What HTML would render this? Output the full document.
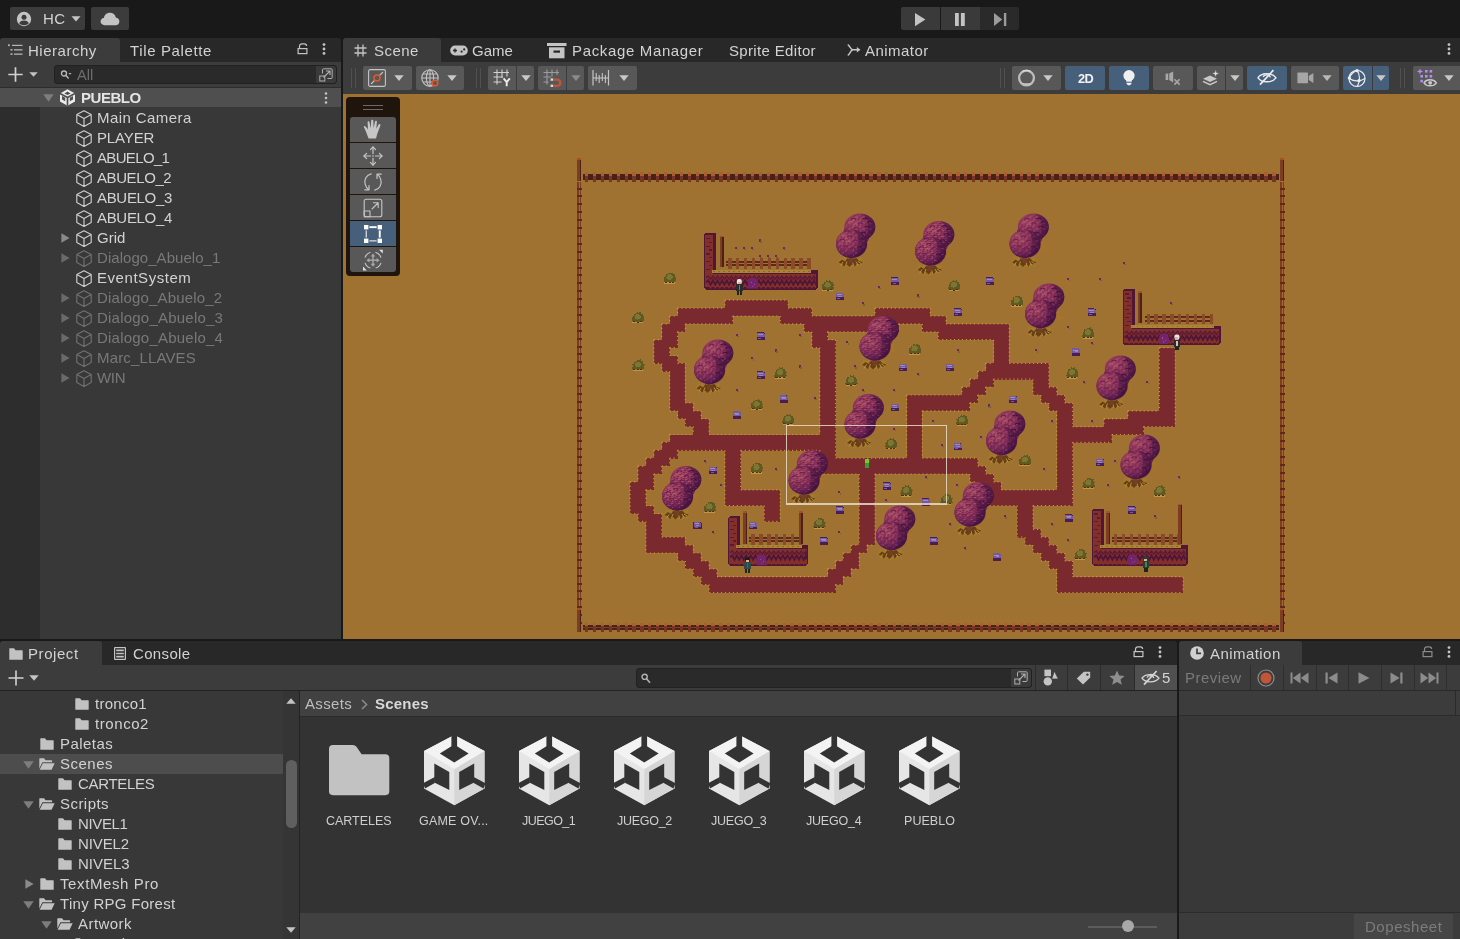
<!DOCTYPE html>
<html lang="en">
<head>
<meta charset="utf-8">
<title>Unity Editor</title>
<style>
html,body{margin:0;padding:0;}
body{width:1460px;height:939px;overflow:hidden;background:#191919;position:relative;
 font-family:"Liberation Sans","DejaVu Sans",sans-serif;font-size:16px;color:#d2d2d2;line-height:20px;}
.abs{position:absolute;}
.t{position:absolute;white-space:nowrap;line-height:20px;height:20px;will-change:transform;}
.btn{position:absolute;background:#3c3c3c;border-radius:2px;}
.sb{position:absolute;background:#585858;top:66px;height:24px;border-radius:2px;}
.sb.on{background:#46607c;}
.dim{color:#7f7f7f;}
svg{position:absolute;overflow:visible;}
.row{position:absolute;left:0;height:20px;}
</style>
</head>
<body>

<!-- ===== top bar ===== -->
<div class="abs" style="left:0;top:0;width:1460px;height:38px;background:#191919"></div>
<div class="btn" style="left:10px;top:7px;width:75px;height:23px"></div>
<svg style="left:16px;top:11px" width="16" height="16" viewBox="0 0 16 16"><circle cx="8" cy="8" r="7.2" fill="#c4c4c4"/><circle cx="8" cy="6.2" r="2.5" fill="#3c3c3c"/><path d="M3.2 12.3 C4.2 10.2 6 9.6 8 9.6 S11.8 10.2 12.8 12.3 C11.6 13.6 9.9 14.2 8 14.2 S4.4 13.6 3.2 12.3Z" fill="#3c3c3c"/></svg>
<div class="t" style="left:42.6px;top:9px;font-size:15px;letter-spacing:0.3px">HC</div>
<svg style="left:71px;top:16px" width="10" height="6" viewBox="0 0 10 6"><path d="M0.5 0.3 H9.5 L5 5.6Z" fill="#c4c4c4"/></svg>
<div class="btn" style="left:91px;top:7px;width:38px;height:23px"></div>
<svg style="left:100px;top:12px" width="20" height="14" viewBox="0 0 20 14"><path d="M4.6 13.2 C2.2 13.2 0.6 11.6 0.6 9.6 C0.6 7.7 2 6.3 3.8 6.1 C4.3 3 6.7 0.8 9.9 0.8 C12.9 0.8 15.3 2.8 15.8 5.6 C17.9 5.9 19.4 7.5 19.4 9.5 C19.4 11.6 17.7 13.2 15.5 13.2Z" fill="#c4c4c4"/></svg>

<!-- play controls -->
<div class="btn" style="left:901px;top:7px;width:39px;height:23px;background:#3a3a3a;border-radius:2px 0 0 2px"></div>
<div class="btn" style="left:941px;top:7px;width:39px;height:23px;background:#3a3a3a;border-radius:0"></div>
<div class="btn" style="left:980px;top:7px;width:39.4px;height:23px;background:#2a2a2a;border-radius:0 2px 2px 0"></div>
<svg style="left:914.9px;top:12.7px" width="10.4" height="13.2" viewBox="0 0 10.4 13.2"><path d="M0 0 L10.4 6.6 L0 13.2Z" fill="#c4c4c4"/></svg>
<svg style="left:955.2px;top:12.9px" width="9.8" height="13" viewBox="0 0 9.8 13"><rect x="0" y="0" width="3.8" height="13" fill="#c4c4c4"/><rect x="5.9" y="0" width="3.9" height="13" fill="#c4c4c4"/></svg>
<svg style="left:994px;top:12.9px" width="12.4" height="13" viewBox="0 0 12.4 13"><path d="M0 0 L8.3 6.5 L0 13Z" fill="#9c9c9c"/><rect x="9.9" y="0" width="2.4" height="13" fill="#9c9c9c"/></svg>

<!-- ===== hierarchy panel ===== -->
<div class="abs" style="left:0;top:38px;width:341px;height:24px;background:#282828;border-radius:3px 3px 0 0"></div>
<div class="abs" style="left:0;top:38px;width:120px;height:24px;background:#3c3c3c;border-radius:3px 3px 0 0"></div>
<svg style="left:8px;top:44px" width="15" height="12" viewBox="0 0 15 12"><g fill="#b4b4b4"><rect x="0" y="0.3" width="1.8" height="1.8"/><rect x="4" y="0.8" width="10.5" height="1.2"/><rect x="2.5" y="5" width="2" height="1.6"/><rect x="6" y="5.2" width="8.5" height="1.3"/><rect x="2.5" y="9.3" width="2" height="1.6"/><rect x="6" y="9.5" width="8.5" height="1.3"/></g></svg>
<div class="t" style="left:28px;top:41px;font-size:15px;letter-spacing:0.52px">Hierarchy</div>
<div class="t" style="left:130px;top:41px;font-size:15px;letter-spacing:0.62px">Tile Palette</div>
<svg style="left:297px;top:43px" width="12" height="12" viewBox="0 0 12 12"><path d="M2.5 5 V3.2 C2.5 1.6 3.6 0.8 4.9 0.8 H7.4 C8.8 0.8 9.6 1.8 9.6 3" fill="none" stroke="#c4c4c4" stroke-width="1.2"/><rect x="1.1" y="5.6" width="8.8" height="5" fill="none" stroke="#c4c4c4" stroke-width="1.2"/></svg>
<svg style="left:322px;top:43px" width="4" height="12" viewBox="0 0 4 12"><circle cx="2" cy="1.6" r="1.4" fill="#c4c4c4"/><circle cx="2" cy="6" r="1.4" fill="#c4c4c4"/><circle cx="2" cy="10.4" r="1.4" fill="#c4c4c4"/></svg>

<div class="abs" style="left:0;top:62px;width:341px;height:25px;background:#3c3c3c"></div>
<svg style="left:8px;top:67px" width="15" height="15" viewBox="0 0 15 15"><path d="M7.5 0.3 V14.7 M0.3 7.5 H14.7" stroke="#d2d2d2" stroke-width="1.7" fill="none"/></svg>
<svg style="left:29px;top:72px" width="9" height="5" viewBox="0 0 9 5"><path d="M0.3 0.2 H8.7 L4.5 4.8Z" fill="#c4c4c4"/></svg>
<div class="abs" style="left:54px;top:65px;width:283px;height:19px;background:#2a2a2a;border:1px solid #212121;border-radius:3px;box-sizing:border-box"></div>
<svg style="left:60px;top:69px" width="12" height="12" viewBox="0 0 12 12"><circle cx="4" cy="4.5" r="2.5" fill="none" stroke="#b4b4b4" stroke-width="1.4"/><path d="M5.8 6.3 L8.6 9.4" stroke="#b4b4b4" stroke-width="1.5"/><path d="M8.4 4 H11.6 L10 5.8Z" fill="#b4b4b4"/></svg>
<div class="t" style="left:77px;top:65px;color:#6e6e6e;font-size:14.5px">All</div>
<div class="abs" style="left:316px;top:66px;width:20px;height:17px;background:#3a3a3a;border-radius:0 3px 3px 0"></div>
<svg style="left:319px;top:68px" width="14" height="14" viewBox="0 0 14 14"><path d="M3.5 5.5 V1.8 C3.5 1.2 3.9 0.8 4.5 0.8 H12.2 C12.8 0.8 13.2 1.2 13.2 1.8 V9.5 C13.2 10.1 12.8 10.5 12.2 10.5 H8.5" fill="none" stroke="#b0b0b0" stroke-width="1"/><rect x="0.8" y="8" width="5" height="5" fill="none" stroke="#b0b0b0" stroke-width="1"/><path d="M4.5 9.5 L10.8 3.2 M7 3 H11 V7" fill="none" stroke="#b0b0b0" stroke-width="1.2"/></svg>

<div class="abs" style="left:0;top:87px;width:341px;height:552px;background:#383838"></div>
<div class="abs" style="left:0;top:107px;width:40px;height:532px;background:#2d2d2d"></div>
<div class="abs" style="left:0;top:87px;width:341px;height:20px;background:#4f4f4f;border-top:1px solid #2d2d2d;box-sizing:border-box"></div>
<!-- hierarchy rows -->
<svg style="left:43px;top:94px" width="11" height="8" viewBox="0 0 11 8"><path d="M0.3 0.3 H10.7 L5.5 7.7Z" fill="#7d7d7d"/></svg>
<svg style="left:59px;top:89px" width="17" height="17" viewBox="0 0 17 17"><path d="M8.5 0.3 L16 4.4 V12.6 L8.5 16.7 L1 12.6 V4.4Z" fill="#ececec"/><g stroke="#4f4f4f" stroke-width="1.7" fill="none"><path d="M8.5 8.5 V16.7 M8.5 8.5 L1 4.4 M8.5 8.5 L16 4.4"/></g><g fill="#4f4f4f"><path d="M8.5 2.6 L11.6 4.4 L8.5 6.1 L5.4 4.4Z"/><path d="M3 7 L6.2 8.8 V12.3 L3 10.6Z"/><path d="M14 7 L10.8 8.8 V12.3 L14 10.6Z"/></g></svg>
<div class="t" style="left:81px;top:88px;font-size:15px;font-weight:bold;color:#e4e4e4;letter-spacing:-0.48px;">PUEBLO</div>
<svg style="left:324px;top:92px" width="4" height="12" viewBox="0 0 4 12"><circle cx="2" cy="1.5" r="1.3" fill="#c4c4c4"/><circle cx="2" cy="6" r="1.3" fill="#c4c4c4"/><circle cx="2" cy="10.5" r="1.3" fill="#c4c4c4"/></svg>
<svg style="left:76px;top:109.5px" width="16" height="17" viewBox="0 0 16 17"><path d="M8 0.8 L15.2 4.6 V12.6 L8 16.4 L0.8 12.6 V4.6 Z M0.8 4.6 L8 8.4 L15.2 4.6 M8 8.4 V16.4" fill="none" stroke="#cfcfcf" stroke-width="1.15" stroke-linejoin="round"/></svg>
<div class="t" style="left:97px;top:108px;font-size:15px;color:#d2d2d2;letter-spacing:0.43px;">Main Camera</div>
<svg style="left:76px;top:129.5px" width="16" height="17" viewBox="0 0 16 17"><path d="M8 0.8 L15.2 4.6 V12.6 L8 16.4 L0.8 12.6 V4.6 Z M0.8 4.6 L8 8.4 L15.2 4.6 M8 8.4 V16.4" fill="none" stroke="#cfcfcf" stroke-width="1.15" stroke-linejoin="round"/></svg>
<div class="t" style="left:97px;top:128px;font-size:15px;color:#d2d2d2;letter-spacing:-0.13px;">PLAYER</div>
<svg style="left:76px;top:149.5px" width="16" height="17" viewBox="0 0 16 17"><path d="M8 0.8 L15.2 4.6 V12.6 L8 16.4 L0.8 12.6 V4.6 Z M0.8 4.6 L8 8.4 L15.2 4.6 M8 8.4 V16.4" fill="none" stroke="#cfcfcf" stroke-width="1.15" stroke-linejoin="round"/></svg>
<div class="t" style="left:97px;top:148px;font-size:15px;color:#d2d2d2;letter-spacing:-0.66px;">ABUELO_1</div>
<svg style="left:76px;top:169.5px" width="16" height="17" viewBox="0 0 16 17"><path d="M8 0.8 L15.2 4.6 V12.6 L8 16.4 L0.8 12.6 V4.6 Z M0.8 4.6 L8 8.4 L15.2 4.6 M8 8.4 V16.4" fill="none" stroke="#cfcfcf" stroke-width="1.15" stroke-linejoin="round"/></svg>
<div class="t" style="left:97px;top:168px;font-size:15px;color:#d2d2d2;letter-spacing:-0.41px;">ABUELO_2</div>
<svg style="left:76px;top:189.5px" width="16" height="17" viewBox="0 0 16 17"><path d="M8 0.8 L15.2 4.6 V12.6 L8 16.4 L0.8 12.6 V4.6 Z M0.8 4.6 L8 8.4 L15.2 4.6 M8 8.4 V16.4" fill="none" stroke="#cfcfcf" stroke-width="1.15" stroke-linejoin="round"/></svg>
<div class="t" style="left:97px;top:188px;font-size:15px;color:#d2d2d2;letter-spacing:-0.32px;">ABUELO_3</div>
<svg style="left:76px;top:209.5px" width="16" height="17" viewBox="0 0 16 17"><path d="M8 0.8 L15.2 4.6 V12.6 L8 16.4 L0.8 12.6 V4.6 Z M0.8 4.6 L8 8.4 L15.2 4.6 M8 8.4 V16.4" fill="none" stroke="#cfcfcf" stroke-width="1.15" stroke-linejoin="round"/></svg>
<div class="t" style="left:97px;top:208px;font-size:15px;color:#d2d2d2;letter-spacing:-0.32px;">ABUELO_4</div>
<svg style="left:61px;top:233px" width="9" height="10" viewBox="0 0 9 10"><path d="M0.4 0.3 L8.6 5 L0.4 9.7Z" fill="#8a8a8a"/></svg>
<svg style="left:76px;top:229.5px" width="16" height="17" viewBox="0 0 16 17"><path d="M8 0.8 L15.2 4.6 V12.6 L8 16.4 L0.8 12.6 V4.6 Z M0.8 4.6 L8 8.4 L15.2 4.6 M8 8.4 V16.4" fill="none" stroke="#cfcfcf" stroke-width="1.15" stroke-linejoin="round"/></svg>
<div class="t" style="left:97px;top:228px;font-size:15px;color:#d2d2d2;letter-spacing:-0.01px;">Grid</div>
<svg style="left:61px;top:253px" width="9" height="10" viewBox="0 0 9 10"><path d="M0.4 0.3 L8.6 5 L0.4 9.7Z" fill="#6a6a6a"/></svg>
<svg style="left:76px;top:249.5px" width="16" height="17" viewBox="0 0 16 17"><path d="M8 0.8 L15.2 4.6 V12.6 L8 16.4 L0.8 12.6 V4.6 Z M0.8 4.6 L8 8.4 L15.2 4.6 M8 8.4 V16.4" fill="none" stroke="#707070" stroke-width="1.15" stroke-linejoin="round"/></svg>
<div class="t" style="left:97px;top:248px;font-size:15px;color:#787878;letter-spacing:0.05px;">Dialogo_Abuelo_1</div>
<svg style="left:76px;top:269.5px" width="16" height="17" viewBox="0 0 16 17"><path d="M8 0.8 L15.2 4.6 V12.6 L8 16.4 L0.8 12.6 V4.6 Z M0.8 4.6 L8 8.4 L15.2 4.6 M8 8.4 V16.4" fill="none" stroke="#cfcfcf" stroke-width="1.15" stroke-linejoin="round"/></svg>
<div class="t" style="left:97px;top:268px;font-size:15px;color:#d2d2d2;letter-spacing:0.55px;">EventSystem</div>
<svg style="left:61px;top:293px" width="9" height="10" viewBox="0 0 9 10"><path d="M0.4 0.3 L8.6 5 L0.4 9.7Z" fill="#6a6a6a"/></svg>
<svg style="left:76px;top:289.5px" width="16" height="17" viewBox="0 0 16 17"><path d="M8 0.8 L15.2 4.6 V12.6 L8 16.4 L0.8 12.6 V4.6 Z M0.8 4.6 L8 8.4 L15.2 4.6 M8 8.4 V16.4" fill="none" stroke="#707070" stroke-width="1.15" stroke-linejoin="round"/></svg>
<div class="t" style="left:97px;top:288px;font-size:15px;color:#787878;letter-spacing:0.17px;">Dialogo_Abuelo_2</div>
<svg style="left:61px;top:313px" width="9" height="10" viewBox="0 0 9 10"><path d="M0.4 0.3 L8.6 5 L0.4 9.7Z" fill="#6a6a6a"/></svg>
<svg style="left:76px;top:309.5px" width="16" height="17" viewBox="0 0 16 17"><path d="M8 0.8 L15.2 4.6 V12.6 L8 16.4 L0.8 12.6 V4.6 Z M0.8 4.6 L8 8.4 L15.2 4.6 M8 8.4 V16.4" fill="none" stroke="#707070" stroke-width="1.15" stroke-linejoin="round"/></svg>
<div class="t" style="left:97px;top:308px;font-size:15px;color:#787878;letter-spacing:0.22px;">Dialogo_Abuelo_3</div>
<svg style="left:61px;top:333px" width="9" height="10" viewBox="0 0 9 10"><path d="M0.4 0.3 L8.6 5 L0.4 9.7Z" fill="#6a6a6a"/></svg>
<svg style="left:76px;top:329.5px" width="16" height="17" viewBox="0 0 16 17"><path d="M8 0.8 L15.2 4.6 V12.6 L8 16.4 L0.8 12.6 V4.6 Z M0.8 4.6 L8 8.4 L15.2 4.6 M8 8.4 V16.4" fill="none" stroke="#707070" stroke-width="1.15" stroke-linejoin="round"/></svg>
<div class="t" style="left:97px;top:328px;font-size:15px;color:#787878;letter-spacing:0.22px;">Dialogo_Abuelo_4</div>
<svg style="left:61px;top:353px" width="9" height="10" viewBox="0 0 9 10"><path d="M0.4 0.3 L8.6 5 L0.4 9.7Z" fill="#6a6a6a"/></svg>
<svg style="left:76px;top:349.5px" width="16" height="17" viewBox="0 0 16 17"><path d="M8 0.8 L15.2 4.6 V12.6 L8 16.4 L0.8 12.6 V4.6 Z M0.8 4.6 L8 8.4 L15.2 4.6 M8 8.4 V16.4" fill="none" stroke="#707070" stroke-width="1.15" stroke-linejoin="round"/></svg>
<div class="t" style="left:97px;top:348px;font-size:15px;color:#787878;letter-spacing:0.15px;">Marc_LLAVES</div>
<svg style="left:61px;top:373px" width="9" height="10" viewBox="0 0 9 10"><path d="M0.4 0.3 L8.6 5 L0.4 9.7Z" fill="#6a6a6a"/></svg>
<svg style="left:76px;top:369.5px" width="16" height="17" viewBox="0 0 16 17"><path d="M8 0.8 L15.2 4.6 V12.6 L8 16.4 L0.8 12.6 V4.6 Z M0.8 4.6 L8 8.4 L15.2 4.6 M8 8.4 V16.4" fill="none" stroke="#707070" stroke-width="1.15" stroke-linejoin="round"/></svg>
<div class="t" style="left:97px;top:368px;font-size:15px;color:#787878;letter-spacing:-0.29px;">WIN</div>

<!-- ===== scene panel: tabs ===== -->
<div class="abs" style="left:343px;top:38px;width:1117px;height:24px;background:#282828;border-radius:3px 0 0 0"></div>
<div class="abs" style="left:343px;top:38px;width:98px;height:24px;background:#3c3c3c;border-radius:3px 3px 0 0"></div>
<svg style="left:354px;top:44px" width="13" height="13" viewBox="0 0 13 13"><path d="M4 0.5 V12.5 M9 0.5 V12.5 M0.5 4 H12.5 M0.5 9 H12.5" stroke="#c4c4c4" stroke-width="1.3" fill="none"/></svg>
<div class="t" style="left:373.5px;top:41px;font-size:15px;letter-spacing:0.47px;">Scene</div>
<svg style="left:450px;top:45px" width="18" height="11" viewBox="0 0 18 11"><rect x="0.2" y="0.6" width="17.6" height="9.8" rx="4.9" fill="#c4c4c4"/><path d="M3 5.5 H7 M5 3.5 V7.5" stroke="#282828" stroke-width="1.3"/><circle cx="11.6" cy="6.6" r="1.1" fill="#282828"/><circle cx="14.2" cy="4.4" r="1.1" fill="#282828"/></svg>
<div class="t" style="left:471.6px;top:41px;font-size:15px;letter-spacing:-0.04px;">Game</div>
<svg style="left:547px;top:43px" width="20" height="16" viewBox="0 0 20 16"><rect x="0" y="0" width="19.5" height="3" fill="#c4c4c4"/><rect x="2" y="4.3" width="15.5" height="11" fill="#c4c4c4"/><rect x="6.5" y="7.5" width="6.5" height="2.2" fill="#282828"/></svg>
<div class="t" style="left:571.5px;top:41px;font-size:15px;letter-spacing:0.65px;">Package Manager</div>
<div class="t" style="left:729.3px;top:41px;font-size:15px;letter-spacing:0.34px;">Sprite Editor</div>
<svg style="left:847px;top:44px" width="14" height="12" viewBox="0 0 14 12"><path d="M1.2 1 C2.5 1.5 3.6 5.6 6 5.8 H12 M1.2 11 C2.6 10.4 3.4 6.4 6 5.8" stroke="#c4c4c4" stroke-width="1.5" fill="none" stroke-linecap="round"/><path d="M9.8 3 L13.4 5.8 L9.8 8.6Z" fill="#c4c4c4"/></svg>
<div class="t" style="left:865.2px;top:41px;font-size:15px;letter-spacing:0.45px;">Animator</div>
<svg style="left:1447px;top:43px" width="4" height="12" viewBox="0 0 4 12"><circle cx="2" cy="1.6" r="1.4" fill="#c4c4c4"/><circle cx="2" cy="6" r="1.4" fill="#c4c4c4"/><circle cx="2" cy="10.4" r="1.4" fill="#c4c4c4"/></svg>

<!-- ===== scene toolbar ===== -->
<div class="abs" style="left:343px;top:62px;width:1117px;height:32px;background:#3c3c3c"></div>
<div class="abs" style="left:351px;top:68px;width:1px;height:20px;background:#505050"></div><div class="abs" style="left:355px;top:68px;width:1px;height:20px;background:#505050"></div>
<div class="sb" style="left:363px;width:49px;border-radius:2px"></div>
<svg style="left:368px;top:69px" width="18" height="18" viewBox="0 0 18 18"><rect x="0.6" y="0.6" width="16.8" height="16.8" rx="1.5" fill="none" stroke="#c4c4c4" stroke-width="1.1"/><path d="M3 15 L6.5 11.5 M11.5 6.5 L15 3" stroke="#c4c4c4" stroke-width="1.1"/><circle cx="9" cy="9" r="3" fill="none" stroke="#e2582a" stroke-width="1.5"/></svg>
<svg style="left:394px;top:75.2px" width="10" height="6.4" viewBox="0 0 10 6.4"><path d="M0.3 0.3 H9.7 L5.0 6.1000000000000005Z" fill="#c8c8c8"/></svg>
<div class="sb" style="left:416px;width:48px;border-radius:2px"></div>
<svg style="left:421px;top:69px" width="19" height="19" viewBox="0 0 19 19"><g fill="none" stroke="#c4c4c4" stroke-width="1.1"><circle cx="9" cy="9" r="8.2"/><ellipse cx="9" cy="9" rx="3.6" ry="8.2"/><path d="M0.8 9 H17.2 M2 5 H16 M2 13 H16 M9 0.8 V17.2"/></g><circle cx="14" cy="14" r="3.4" fill="#585858"/><circle cx="14" cy="14" r="2.8" fill="none" stroke="#e2582a" stroke-width="1.5"/></svg>
<svg style="left:447px;top:75.2px" width="10" height="6.4" viewBox="0 0 10 6.4"><path d="M0.3 0.3 H9.7 L5.0 6.1000000000000005Z" fill="#c8c8c8"/></svg>
<div class="abs" style="left:476px;top:68px;width:1px;height:20px;background:#505050"></div><div class="abs" style="left:480px;top:68px;width:1px;height:20px;background:#505050"></div>
<div class="sb" style="left:488px;width:28px;border-radius:2px 0 0 2px"></div>
<svg style="left:493px;top:69px" width="19" height="18" viewBox="0 0 19 18"><path d="M4 0.5 V15.5 M9 0.5 V9 M14 0.5 V7.5 M0.5 3.5 H16 M0.5 8 H10 M0.5 13 H8.5" stroke="#d2d2d2" stroke-width="1.1" fill="none"/><path d="M10.6 9.4 L13.7 13.2 V17.2 M16.8 9.4 L13.7 13.2" stroke="#ececec" stroke-width="1.9" fill="none"/></svg>
<div class="sb" style="left:517px;width:17px;border-radius:0 2px 2px 0"></div>
<svg style="left:520.5px;top:75.2px" width="10" height="6.4" viewBox="0 0 10 6.4"><path d="M0.3 0.3 H9.7 L5.0 6.1000000000000005Z" fill="#c8c8c8"/></svg>
<div class="sb" style="left:538px;width:28px;border-radius:2px 0 0 2px"></div>
<svg style="left:543px;top:69px" width="19" height="19" viewBox="0 0 19 19"><path d="M4 0.5 V15.5 M9 0.5 V7.5 M14 0.5 V6 M0.5 3.5 H16 M0.5 8 H8 M0.5 13 H5.5" stroke="#9c9c9c" stroke-width="1.1" fill="none"/><path d="M11 10.6 H14 C16 10.6 17.3 11.9 17.3 13.7 C17.3 15.5 16 16.8 14 16.8 H11" stroke="#c0553a" stroke-width="2.3" fill="none"/><rect x="7.6" y="9.4" width="2.6" height="2.4" fill="#d8d8d8"/><rect x="7.6" y="15.6" width="2.6" height="2.4" fill="#d8d8d8"/></svg>
<div class="sb" style="left:567px;width:17px;border-radius:0 2px 2px 0"></div>
<svg style="left:570.5px;top:75.2px" width="10" height="6.4" viewBox="0 0 10 6.4"><path d="M0.3 0.3 H9.7 L5.0 6.1000000000000005Z" fill="#8a8a8a"/></svg>
<div class="sb" style="left:588px;width:49px;border-radius:2px"></div>
<svg style="left:592px;top:69px" width="18" height="18" viewBox="0 0 18 18"><path d="M1 1 V16.5 M16.5 1 V16.5" stroke="#c4c4c4" stroke-width="1.2"/><path d="M4.2 4 V12 M7.2 6 V14 M10.3 4 V12 M13.4 6 V14" stroke="#c4c4c4" stroke-width="1.1"/><path d="M1 9 H16.5" stroke="#c4c4c4" stroke-width="1.1"/></svg>
<svg style="left:619px;top:75.2px" width="10" height="6.4" viewBox="0 0 10 6.4"><path d="M0.3 0.3 H9.7 L5.0 6.1000000000000005Z" fill="#c8c8c8"/></svg>
<div class="abs" style="left:1000px;top:68px;width:1px;height:20px;background:#505050"></div><div class="abs" style="left:1004px;top:68px;width:1px;height:20px;background:#505050"></div>
<div class="sb" style="left:1012px;width:49px;border-radius:2px"></div>
<svg style="left:1017px;top:69px" width="19" height="19" viewBox="0 0 19 19"><circle cx="9.5" cy="9" r="7.4" fill="none" stroke="#bdbdbd" stroke-width="2.3"/><path d="M3.2 13.2 C5.5 16.8 12.5 17.2 15.8 13.2 C13.5 14.6 6 14.8 3.2 13.2Z" fill="#c4c4c4"/><path d="M5 2.6 C8 0.9 11 0.9 14 2.6" stroke="#d8d8d8" stroke-width="1.2" fill="none"/></svg>
<svg style="left:1043px;top:75.2px" width="10" height="6.4" viewBox="0 0 10 6.4"><path d="M0.3 0.3 H9.7 L5.0 6.1000000000000005Z" fill="#c8c8c8"/></svg>
<div class="sb on" style="left:1065px;width:40px;border-radius:2px"></div>
<div class="t" style="left:1077.8px;top:68.8px;font-size:12.8px;font-weight:bold;color:#f2f2f2;letter-spacing:-0.55px;">2D</div>
<div class="sb on" style="left:1109px;width:40px;border-radius:2px"></div>
<svg style="left:1122px;top:69px" width="14" height="18" viewBox="0 0 14 18"><circle cx="7" cy="6.6" r="5.6" fill="#efefef"/><rect x="4.2" y="10" width="5.6" height="3" fill="#efefef"/><path d="M4.4 13.6 H9.6 C9.6 15.4 8.5 16.4 7 16.4 S4.4 15.4 4.4 13.6Z" fill="#efefef"/><path d="M4 13.1 H10" stroke="#46607c" stroke-width="0.8"/></svg>
<div class="sb" style="left:1153px;width:40px;border-radius:2px"></div>
<svg style="left:1165px;top:71px" width="17" height="15" viewBox="0 0 17 15"><rect x="0.6" y="2.6" width="2.6" height="6.4" fill="#a8a8a8"/><path d="M4.2 2.6 L8.2 0.4 V11.4 L4.2 9Z" fill="#a8a8a8"/><path d="M9.4 8.2 L14.6 13.6 M14.6 8.2 L9.4 13.6" stroke="#a8a8a8" stroke-width="1.6"/></svg>
<div class="sb" style="left:1197px;width:28px;border-radius:2px 0 0 2px"></div>
<svg style="left:1202px;top:69px" width="19" height="18" viewBox="0 0 19 18"><path d="M8 6.5 L15 9.7 L8 13 L1 9.7Z" fill="#c8c8c8"/><path d="M1 12.4 L8 15.7 L15 12.4" stroke="#c8c8c8" stroke-width="1.6" fill="none"/><path d="M13.6 0.6 L14.6 3.6 L17.6 4.6 L14.6 5.6 L13.6 8.6 L12.6 5.6 L9.6 4.6 L12.6 3.6Z" fill="#e0e0e0" stroke="#585858" stroke-width="0.6"/></svg>
<div class="sb" style="left:1226px;width:17px;border-radius:0 2px 2px 0"></div>
<svg style="left:1229.5px;top:75.2px" width="10" height="6.4" viewBox="0 0 10 6.4"><path d="M0.3 0.3 H9.7 L5.0 6.1000000000000005Z" fill="#c8c8c8"/></svg>
<div class="sb on" style="left:1247px;width:40px;border-radius:2px"></div>
<svg style="left:1257px;top:69px" width="20" height="17" viewBox="0 0 20 17"><path d="M1 8.8 C4 3.6 15 3.2 19 8.8 C15 14.2 4.4 14 1 8.8Z" fill="none" stroke="#ececec" stroke-width="1.4"/><path d="M6.2 8 C7 5.4 12.6 5 13.4 8.4" fill="none" stroke="#ececec" stroke-width="1.3"/><path d="M3 15.6 L16.4 1.2" stroke="#ececec" stroke-width="1.7"/></svg>
<div class="sb" style="left:1291px;width:48px;border-radius:2px"></div>
<svg style="left:1297px;top:72px" width="17" height="12" viewBox="0 0 17 12"><rect x="0.4" y="0.6" width="10.6" height="10.6" rx="0.8" fill="#a6a6a6"/><path d="M11.8 4 L16.4 1 V11 L11.8 8Z" fill="#a6a6a6"/></svg>
<svg style="left:1322px;top:75.2px" width="10" height="6.4" viewBox="0 0 10 6.4"><path d="M0.3 0.3 H9.7 L5.0 6.1000000000000005Z" fill="#b8b8b8"/></svg>
<div class="sb on" style="left:1343px;width:29px;border-radius:2px 0 0 2px"></div>
<svg style="left:1347px;top:68px" width="20" height="20" viewBox="0 0 20 20"><g fill="none" stroke="#ececec" stroke-width="1.2"><circle cx="10" cy="10.4" r="8"/><path d="M2 10.2 C6 13.4 13 14 18 10.6 M10 2.4 C13 6 13.4 13 10.4 18.4 M2.2 9.6 C4 6.5 7 3.5 10 2.4"/></g><g fill="#ececec"><circle cx="10" cy="2.6" r="1.7"/><circle cx="2.4" cy="10" r="1.7"/><circle cx="12" cy="12.6" r="1.7"/></g></svg>
<div class="sb on" style="left:1373px;width:16px;border-radius:0 2px 2px 0"></div>
<svg style="left:1376px;top:75.2px" width="10" height="6.4" viewBox="0 0 10 6.4"><path d="M0.3 0.3 H9.7 L5.0 6.1000000000000005Z" fill="#c8c8c8"/></svg>
<div class="abs" style="left:1400px;top:68px;width:1px;height:20px;background:#505050"></div><div class="abs" style="left:1404px;top:68px;width:1px;height:20px;background:#505050"></div>
<div class="sb" style="left:1413px;width:50px;border-radius:2px 0 0 2px"></div>
<svg style="left:1418px;top:68px" width="21" height="20" viewBox="0 0 21 20"><g fill="#b48cf0"><path d="M2 0.4 L2.9 2.6 L5.2 3.4 L2.9 4.2 L2 6.4 L1.1 4.2 L-1.2 3.4 L1.1 2.6Z"/><rect x="7" y="2" width="2.6" height="2.6"/><rect x="11.6" y="2" width="2.6" height="2.6"/><rect x="2.4" y="7" width="2.6" height="2.6"/><rect x="7" y="7" width="2.6" height="2.6"/><rect x="11.6" y="7" width="2.6" height="2.6"/><rect x="2.4" y="11.8" width="2.6" height="2.6"/></g><path d="M6 14.8 C8.5 10.8 15.5 10.8 18.4 14.8 C15.5 18.8 8.5 18.8 6 14.8Z" fill="#585858" stroke="#c8c8c8" stroke-width="1.4"/><circle cx="12.2" cy="14.8" r="1.9" fill="#c8c8c8"/></svg>
<svg style="left:1444px;top:75.2px" width="10" height="6.4" viewBox="0 0 10 6.4"><path d="M0.3 0.3 H9.7 L5.0 6.1000000000000005Z" fill="#c8c8c8"/></svg>

<!-- ===== scene view (tile map) ===== -->
<svg style="left:343px;top:94px" width="1117" height="545" viewBox="343 94 1117 545" shape-rendering="crispEdges">
<rect x="343" y="94" width="1117" height="545" fill="#a07232"/>
<defs><radialGradient id="tg" cx="0.37" cy="0.36" r="0.68" fx="0.3" fy="0.28"><stop offset="0" stop-color="#a84a64"/><stop offset="0.45" stop-color="#8e3459"/><stop offset="0.7" stop-color="#782956"/><stop offset="0.88" stop-color="#5a1c4c"/><stop offset="1" stop-color="#4a1444"/></radialGradient><pattern id="lf" width="7" height="6" patternUnits="userSpaceOnUse"><g fill="#561a4b" opacity="0.55"><rect x="0" y="0" width="2" height="1"/><rect x="3" y="2" width="2" height="1"/><rect x="1" y="4" width="2" height="1"/><rect x="5" y="5" width="1" height="1"/><rect x="5" y="1" width="1" height="1"/></g><g fill="#bb6272" opacity="0.5"><rect x="2" y="1" width="2" height="1"/><rect x="0" y="3" width="1" height="1"/><rect x="5" y="3" width="2" height="1"/><rect x="3" y="5" width="1" height="1"/></g></pattern><g id="tree" shape-rendering="auto"><path d="M0.5 49 L4 45.5 L3 43.5 L7 45 L9 42.5 L11 45.5 L14 44 L18 45.5 L20 42.5 L22.5 45 L26 43.5 L25.5 46.5 L28.8 49 L25 50 L26 53 L22 51.5 L20 54.5 L17.5 52 L14.5 55 L12 52.5 L9 54.5 L7.5 52 L3.5 53.5 L4.5 50.5Z" fill="#a67a2c" opacity="0.9"/><path d="M2.5 49 L6 46 L9 48 L11.5 44.5 L14.5 47 L18 45 L20.5 44.5 L23 47.5 L27 48.5 L23.5 51 L21 50 L19 53 L16 51 L13.5 53.5 L11 51 L8 53 L6 50.5Z" fill="#5e3a14" opacity="0.9"/><path d="M5 51.5 l2 -3 M9.5 52 l1.5 -4 M17.5 52.5 l-1 -4 M22 51.5 l-2 -3.5 M25 50 l-3 -2" stroke="#d0a048" stroke-width="0.8" fill="none"/><path d="M12.6 41 L17.4 41 L17 49.5 L13 49.5Z" fill="#7a3c26"/><path d="M30.6 28 l5 1.5 M31 31.5 l5.5 3.5 M32.8 28 l1.4 8 M30.8 35.5 l4.5 0.5" stroke="#a87428" stroke-width="1.1" fill="none"/><ellipse cx="20.4" cy="21" rx="13.2" ry="15" transform="rotate(28 20.4 21)" fill="#6b2352"/><ellipse cx="23.8" cy="13.5" rx="15.5" ry="13.4" fill="url(#tg)"/><ellipse cx="23.8" cy="13.5" rx="14.6" ry="12.5" fill="url(#lf)"/><path d="M25.8 0.2 A15.5 13.4 0 0 1 25.8 26.8 A6.6 13.4 0 0 0 25.8 0.2Z" fill="#3c0f3a" opacity="0.38"/><ellipse cx="15.6" cy="30.4" rx="15.6" ry="14.2" fill="#521848"/><ellipse cx="15.2" cy="30" rx="15.2" ry="13.8" fill="url(#tg)"/><ellipse cx="15.2" cy="30" rx="14.4" ry="13" fill="url(#lf)"/><path d="M17.2 16.3 A15.2 13.8 0 0 1 17.2 43.7 A6.4 13.8 0 0 0 17.2 16.3Z" fill="#3c0f3a" opacity="0.38"/><path d="M9 18.5 q2.5 -2.5 5 0 M15 6 q2.5 -2.5 5 0 M22 10.5 q2.5 -2.5 5 0 M18 15.5 q2.5 -2.5 5 0 M4 27 q2.5 -2.5 5 0 M11 23.5 q2.5 -2.5 5 0 M17 28 q2.5 -2.5 5 0 M7 33.5 q2.5 -2.5 5 0 M14 35.5 q2.5 -2.5 5 0 M10 40 q2.5 -2 5 0" stroke="#6a2152" stroke-width="1.1" fill="none"/><path d="M27 5.5 q2.5 -2 5 0 M29 14 q2.5 -2.5 5 0 M25 20 q2.5 -2.5 5 0 M21 34 q2.5 -2.5 5 0 M23 26 q2 -2 4.5 0 M24 38 q2 -2 4 0 M32 9 q2 -2 4 0" stroke="#43123f" stroke-width="1.1" fill="none"/><path d="M12 9 q2 -2.5 4.5 0 M17 11.5 q2 -2.5 4.5 0 M6 23 q2 -2.5 4.5 0 M10 28.5 q2 -2.5 4.5 0 M3 31 q2 -2 4 0" stroke="#b85c6c" stroke-width="1" fill="none" opacity="0.8"/></g>
</defs>
<path d="M724.9 300.2h63.2v8.2h-63.2zM677.5 308.1h134.3v8.2h-134.3zM875 308.1h55.3v8.2h-55.3zM669.6 316h63.2v8.2h-63.2zM780.2 316h165.9v8.2h-165.9zM661.7 323.9h23.7v8.2h-23.7zM803.9 323.9h94.8v8.2h-94.8zM922.4 323.9h86.9v8.2h-86.9zM661.7 331.8h15.8v8.2h-15.8zM811.8 331.8h15.8v8.2h-15.8zM938.2 331.8h71.1v8.2h-71.1zM653.8 339.7h23.7v8.2h-23.7zM811.8 339.7h23.7v8.2h-23.7zM993.5 339.7h15.8v8.2h-15.8zM653.8 347.6h15.8v8.2h-15.8zM819.7 347.6h15.8v8.2h-15.8zM993.5 347.6h15.8v8.2h-15.8zM1159.4 347.6h15.8v8.2h-15.8zM653.8 355.5h23.7v8.2h-23.7zM819.7 355.5h15.8v8.2h-15.8zM993.5 355.5h15.8v8.2h-15.8zM1159.4 355.5h15.8v8.2h-15.8zM661.7 363.4h23.7v8.2h-23.7zM819.7 363.4h15.8v8.2h-15.8zM985.6 363.4h63.2v8.2h-63.2zM1159.4 363.4h15.8v8.2h-15.8zM669.6 371.3h15.8v8.2h-15.8zM819.7 371.3h15.8v8.2h-15.8zM977.7 371.3h71.1v8.2h-71.1zM1159.4 371.3h15.8v8.2h-15.8zM669.6 379.2h15.8v8.2h-15.8zM819.7 379.2h15.8v8.2h-15.8zM969.8 379.2h23.7v8.2h-23.7zM1033 379.2h15.8v8.2h-15.8zM1159.4 379.2h15.8v8.2h-15.8zM669.6 387.1h15.8v8.2h-15.8zM819.7 387.1h15.8v8.2h-15.8zM961.9 387.1h23.7v8.2h-23.7zM1033 387.1h23.7v8.2h-23.7zM1159.4 387.1h15.8v8.2h-15.8zM669.6 395h15.8v8.2h-15.8zM819.7 395h15.8v8.2h-15.8zM906.6 395h71.1v8.2h-71.1zM1040.9 395h23.7v8.2h-23.7zM1159.4 395h15.8v8.2h-15.8zM669.6 402.9h23.7v8.2h-23.7zM819.7 402.9h15.8v8.2h-15.8zM906.6 402.9h63.2v8.2h-63.2zM1048.8 402.9h23.7v8.2h-23.7zM1159.4 402.9h15.8v8.2h-15.8zM677.5 410.8h23.7v8.2h-23.7zM819.7 410.8h15.8v8.2h-15.8zM906.6 410.8h15.8v8.2h-15.8zM1056.7 410.8h15.8v8.2h-15.8zM1127.8 410.8h47.4v8.2h-47.4zM685.4 418.7h23.7v8.2h-23.7zM819.7 418.7h15.8v8.2h-15.8zM906.6 418.7h15.8v8.2h-15.8zM1056.7 418.7h15.8v8.2h-15.8zM1104.1 418.7h71.1v8.2h-71.1zM693.3 426.6h15.8v8.2h-15.8zM819.7 426.6h15.8v8.2h-15.8zM906.6 426.6h15.8v8.2h-15.8zM1056.7 426.6h86.9v8.2h-86.9zM669.6 434.5h165.9v8.2h-165.9zM906.6 434.5h15.8v8.2h-15.8zM1056.7 434.5h55.3v8.2h-55.3zM661.7 442.4h173.8v8.2h-173.8zM906.6 442.4h15.8v8.2h-15.8zM1056.7 442.4h15.8v8.2h-15.8zM653.8 450.3h23.7v8.2h-23.7zM724.9 450.3h15.8v8.2h-15.8zM819.7 450.3h15.8v8.2h-15.8zM906.6 450.3h15.8v8.2h-15.8zM1056.7 450.3h15.8v8.2h-15.8zM645.9 458.2h23.7v8.2h-23.7zM724.9 458.2h15.8v8.2h-15.8zM819.7 458.2h158v8.2h-158zM1056.7 458.2h15.8v8.2h-15.8zM638 466.1h23.7v8.2h-23.7zM724.9 466.1h15.8v8.2h-15.8zM819.7 466.1h165.9v8.2h-165.9zM1056.7 466.1h15.8v8.2h-15.8zM638 474h15.8v8.2h-15.8zM724.9 474h15.8v8.2h-15.8zM859.2 474h15.8v8.2h-15.8zM969.8 474h23.7v8.2h-23.7zM1056.7 474h15.8v8.2h-15.8zM630.1 481.9h23.7v8.2h-23.7zM724.9 481.9h15.8v8.2h-15.8zM859.2 481.9h15.8v8.2h-15.8zM977.7 481.9h23.7v8.2h-23.7zM1056.7 481.9h15.8v8.2h-15.8zM630.1 489.8h15.8v8.2h-15.8zM724.9 489.8h55.3v8.2h-55.3zM859.2 489.8h15.8v8.2h-15.8zM985.6 489.8h86.9v8.2h-86.9zM630.1 497.7h15.8v8.2h-15.8zM724.9 497.7h55.3v8.2h-55.3zM859.2 497.7h15.8v8.2h-15.8zM985.6 497.7h86.9v8.2h-86.9zM630.1 505.6h23.7v8.2h-23.7zM764.4 505.6h15.8v8.2h-15.8zM859.2 505.6h15.8v8.2h-15.8zM1017.2 505.6h15.8v8.2h-15.8zM638 513.5h23.7v8.2h-23.7zM764.4 513.5h15.8v8.2h-15.8zM859.2 513.5h15.8v8.2h-15.8zM1017.2 513.5h15.8v8.2h-15.8zM645.9 521.4h15.8v8.2h-15.8zM859.2 521.4h15.8v8.2h-15.8zM1017.2 521.4h15.8v8.2h-15.8zM645.9 529.3h15.8v8.2h-15.8zM859.2 529.3h15.8v8.2h-15.8zM1017.2 529.3h23.7v8.2h-23.7zM645.9 537.2h39.5v8.2h-39.5zM859.2 537.2h15.8v8.2h-15.8zM1025.1 537.2h23.7v8.2h-23.7zM645.9 545.1h47.4v8.2h-47.4zM851.3 545.1h15.8v8.2h-15.8zM1033 545.1h23.7v8.2h-23.7zM677.5 553h23.7v8.2h-23.7zM843.4 553h15.8v8.2h-15.8zM1040.9 553h23.7v8.2h-23.7zM685.4 560.9h23.7v8.2h-23.7zM835.5 560.9h23.7v8.2h-23.7zM1048.8 560.9h23.7v8.2h-23.7zM693.3 568.8h23.7v8.2h-23.7zM827.6 568.8h23.7v8.2h-23.7zM1056.7 568.8h15.8v8.2h-15.8zM701.2 576.7h142.2v8.2h-142.2zM1056.7 576.7h126.4v8.2h-126.4zM709.1 584.6h126.4v8.2h-126.4zM1056.7 584.6h126.4v8.2h-126.4z" fill="#7a292e"/>
<path d="M669.6 434.5h23.7M709.1 434.5h110.6M1112 434.5h31.6M685.4 426.6h7.9M1072.5 426.6h31.6M1143.6 426.6h31.6M724.9 300.2h63.2M669.6 316h7.9M732.8 316h47.4M811.8 316h63.2M930.3 316h15.8M645.9 458.2h7.9M669.6 458.2h7.9M835.5 458.2h71.1M922.4 458.2h55.3M630.1 513.5h7.9M653.8 513.5h7.9M677.5 331.8h7.9M803.9 331.8h7.9M827.6 331.8h71.1M922.4 331.8h15.8M693.3 576.7h7.9M717 576.7h110.6M843.4 576.7h7.9M1072.5 576.7h110.6M906.6 395h55.3M977.7 395h7.9M1033 395h7.9M1056.7 395h7.9M645.9 505.6h7.9M724.9 505.6h39.5M985.6 505.6h31.6M1033 505.6h39.5M685.4 568.8h7.9M709.1 568.8h7.9M827.6 568.8h7.9M851.3 568.8h7.9M1048.8 568.8h7.9M709.1 592.5h126.4M1056.7 592.5h126.4M677.5 560.9h7.9M701.2 560.9h7.9M835.5 560.9h7.9M1040.9 560.9h7.9M1064.6 560.9h7.9M653.8 339.7h7.9M827.6 339.7h7.9M938.2 339.7h55.3M669.6 410.8h7.9M693.3 410.8h7.9M922.4 410.8h47.4M1048.8 410.8h7.9M1127.8 410.8h31.6M645.9 553h31.6M693.3 553h7.9M843.4 553h7.9M859.2 553h7.9M1033 553h7.9M1056.7 553h7.9M653.8 450.3h7.9M677.5 450.3h47.4M740.7 450.3h79M677.5 308.1h47.4M788.1 308.1h23.7M875 308.1h55.3M961.9 387.1h7.9M985.6 387.1h7.9M1048.8 387.1h7.9M661.7 323.9h7.9M685.4 323.9h47.4M780.2 323.9h23.7M898.7 323.9h23.7M946.1 323.9h63.2M645.9 489.8h7.9M740.7 489.8h39.5M977.7 489.8h7.9M1001.4 489.8h55.3M661.7 442.4h7.9M1072.5 442.4h39.5M653.8 474h7.9M819.7 474h39.5M875 474h94.8M985.6 474h7.9M669.6 347.6h7.9M811.8 347.6h7.9M1159.4 347.6h15.8M677.5 418.7h7.9M701.2 418.7h7.9M1104.1 418.7h23.7M653.8 363.4h7.9M677.5 363.4h7.9M985.6 363.4h7.9M1009.3 363.4h39.5M638 521.4h7.9M764.4 521.4h15.8M685.4 402.9h7.9M969.8 402.9h7.9M1040.9 402.9h7.9M1064.6 402.9h7.9M969.8 379.2h7.9M993.5 379.2h39.5M661.7 537.2h23.7M1017.2 537.2h7.9M1040.9 537.2h7.9M638 466.1h7.9M661.7 466.1h7.9M977.7 466.1h7.9M685.4 545.1h7.9M851.3 545.1h7.9M867.1 545.1h7.9M1025.1 545.1h7.9M1048.8 545.1h7.9M1033 529.3h7.9M669.6 355.5h7.9M661.7 371.3h7.9M977.7 371.3h7.9M701.2 584.6h7.9M835.5 584.6h7.9M630.1 481.9h7.9M969.8 481.9h7.9M993.5 481.9h7.9M724.9 300.2v7.9M724.9 450.3v55.3M1175.2 347.6v79M985.6 363.4v7.9M985.6 387.1v7.9M985.6 466.1v7.9M985.6 489.8v15.8M661.7 323.9v15.8M661.7 363.4v7.9M661.7 442.4v7.9M661.7 466.1v7.9M661.7 513.5v23.7M993.5 339.7v23.7M993.5 379.2v7.9M993.5 474v7.9M780.2 316v7.9M780.2 489.8v31.6M685.4 323.9v7.9M685.4 363.4v39.5M685.4 418.7v7.9M685.4 537.2v7.9M685.4 560.9v7.9M859.2 474v71.1M859.2 553v15.8M1040.9 395v7.9M1040.9 529.3v7.9M1040.9 553v7.9M645.9 458.2v7.9M645.9 489.8v15.8M645.9 521.4v31.6M1048.8 363.4v23.7M1048.8 402.9v7.9M1048.8 537.2v7.9M1048.8 560.9v7.9M653.8 339.7v23.7M653.8 450.3v7.9M653.8 474v15.8M653.8 505.6v7.9M930.3 308.1v7.9M1159.4 347.6v63.2M1112 434.5v7.9M709.1 418.7v15.8M709.1 560.9v7.9M709.1 584.6v7.9M717 568.8v7.9M1072.5 402.9v23.7M1072.5 442.4v63.2M1072.5 560.9v15.8M835.5 339.7v118.5M835.5 560.9v7.9M835.5 584.6v7.9M922.4 323.9v7.9M922.4 410.8v47.4M677.5 308.1v7.9M677.5 331.8v15.8M677.5 355.5v7.9M677.5 410.8v7.9M677.5 450.3v7.9M677.5 553v7.9M803.9 323.9v7.9M898.7 323.9v7.9M1056.7 387.1v7.9M1056.7 410.8v79M1056.7 545.1v7.9M1056.7 568.8v23.7M740.7 450.3v39.5M764.4 505.6v15.8M819.7 347.6v86.9M819.7 450.3v23.7M851.3 545.1v7.9M851.3 568.8v7.9M1033 379.2v15.8M1033 505.6v23.7M1033 545.1v7.9M1009.3 323.9v39.5M1183.1 576.7v15.8M977.7 371.3v7.9M977.7 395v7.9M977.7 458.2v7.9M977.7 481.9v7.9M906.6 395v63.2M669.6 316v7.9M669.6 347.6v7.9M669.6 371.3v39.5M669.6 434.5v7.9M669.6 458.2v7.9M630.1 481.9v31.6M638 466.1v15.8M638 513.5v7.9M875 308.1v7.9M875 474v71.1M938.2 331.8v7.9M693.3 402.9v7.9M693.3 426.6v7.9M693.3 545.1v7.9M693.3 568.8v7.9M969.8 379.2v7.9M969.8 402.9v7.9M969.8 474v7.9M811.8 308.1v7.9M811.8 331.8v15.8M1017.2 505.6v31.6M946.1 316v7.9M701.2 410.8v7.9M701.2 553v7.9M701.2 576.7v7.9M788.1 300.2v7.9M1104.1 418.7v7.9M827.6 331.8v7.9M827.6 568.8v7.9M867.1 545.1v7.9M1127.8 410.8v7.9M1064.6 395v7.9M1064.6 553v7.9M1025.1 537.2v7.9M1001.4 481.9v7.9M732.8 316v7.9M843.4 553v7.9M843.4 576.7v7.9M961.9 387.1v7.9M1143.6 426.6v7.9" fill="none" stroke="#cf9a3e" stroke-width="1.2" stroke-dasharray="1.2 2.75" shape-rendering="auto" opacity="0.9"/>
<rect x="583" y="174.1" width="696" height="5.6" fill="#4a2018"/><rect x="583" y="176.5" width="696" height="0.9" fill="#7c4226"/>
<path d="M585 172h3.2v3.6h-3.2zM592.9 172h3.2v3.6h-3.2zM600.8 172h3.2v3.6h-3.2zM608.7 172h3.2v3.6h-3.2zM616.6 172h3.2v3.6h-3.2zM624.5 172h3.2v3.6h-3.2zM632.4 172h3.2v3.6h-3.2zM640.3 172h3.2v3.6h-3.2zM648.2 172h3.2v3.6h-3.2zM656.1 172h3.2v3.6h-3.2zM664 172h3.2v3.6h-3.2zM671.9 172h3.2v3.6h-3.2zM679.8 172h3.2v3.6h-3.2zM687.7 172h3.2v3.6h-3.2zM695.6 172h3.2v3.6h-3.2zM703.5 172h3.2v3.6h-3.2zM711.4 172h3.2v3.6h-3.2zM719.3 172h3.2v3.6h-3.2zM727.2 172h3.2v3.6h-3.2zM735.1 172h3.2v3.6h-3.2zM743 172h3.2v3.6h-3.2zM750.9 172h3.2v3.6h-3.2zM758.8 172h3.2v3.6h-3.2zM766.7 172h3.2v3.6h-3.2zM774.6 172h3.2v3.6h-3.2zM782.5 172h3.2v3.6h-3.2zM790.4 172h3.2v3.6h-3.2zM798.3 172h3.2v3.6h-3.2zM806.2 172h3.2v3.6h-3.2zM814.1 172h3.2v3.6h-3.2zM822 172h3.2v3.6h-3.2zM829.9 172h3.2v3.6h-3.2zM837.8 172h3.2v3.6h-3.2zM845.7 172h3.2v3.6h-3.2zM853.6 172h3.2v3.6h-3.2zM861.5 172h3.2v3.6h-3.2zM869.4 172h3.2v3.6h-3.2zM877.3 172h3.2v3.6h-3.2zM885.2 172h3.2v3.6h-3.2zM893.1 172h3.2v3.6h-3.2zM901 172h3.2v3.6h-3.2zM908.9 172h3.2v3.6h-3.2zM916.8 172h3.2v3.6h-3.2zM924.7 172h3.2v3.6h-3.2zM932.6 172h3.2v3.6h-3.2zM940.5 172h3.2v3.6h-3.2zM948.4 172h3.2v3.6h-3.2zM956.3 172h3.2v3.6h-3.2zM964.2 172h3.2v3.6h-3.2zM972.1 172h3.2v3.6h-3.2zM980 172h3.2v3.6h-3.2zM987.9 172h3.2v3.6h-3.2zM995.8 172h3.2v3.6h-3.2zM1003.7 172h3.2v3.6h-3.2zM1011.6 172h3.2v3.6h-3.2zM1019.5 172h3.2v3.6h-3.2zM1027.4 172h3.2v3.6h-3.2zM1035.3 172h3.2v3.6h-3.2zM1043.2 172h3.2v3.6h-3.2zM1051.1 172h3.2v3.6h-3.2zM1059 172h3.2v3.6h-3.2zM1066.9 172h3.2v3.6h-3.2zM1074.8 172h3.2v3.6h-3.2zM1082.7 172h3.2v3.6h-3.2zM1090.6 172h3.2v3.6h-3.2zM1098.5 172h3.2v3.6h-3.2zM1106.4 172h3.2v3.6h-3.2zM1114.3 172h3.2v3.6h-3.2zM1122.2 172h3.2v3.6h-3.2zM1130.1 172h3.2v3.6h-3.2zM1138 172h3.2v3.6h-3.2zM1145.9 172h3.2v3.6h-3.2zM1153.8 172h3.2v3.6h-3.2zM1161.7 172h3.2v3.6h-3.2zM1169.6 172h3.2v3.6h-3.2zM1177.5 172h3.2v3.6h-3.2zM1185.4 172h3.2v3.6h-3.2zM1193.3 172h3.2v3.6h-3.2zM1201.2 172h3.2v3.6h-3.2zM1209.1 172h3.2v3.6h-3.2zM1217 172h3.2v3.6h-3.2zM1224.9 172h3.2v3.6h-3.2zM1232.8 172h3.2v3.6h-3.2zM1240.7 172h3.2v3.6h-3.2zM1248.6 172h3.2v3.6h-3.2zM1256.5 172h3.2v3.6h-3.2zM1264.4 172h3.2v3.6h-3.2zM1272.3 172h3.2v3.6h-3.2z" fill="#ac5e2c"/><path d="M585 175.6h3.2v6.2h-3.2zM592.9 175.6h3.2v6.2h-3.2zM600.8 175.6h3.2v6.2h-3.2zM608.7 175.6h3.2v6.2h-3.2zM616.6 175.6h3.2v6.2h-3.2zM624.5 175.6h3.2v6.2h-3.2zM632.4 175.6h3.2v6.2h-3.2zM640.3 175.6h3.2v6.2h-3.2zM648.2 175.6h3.2v6.2h-3.2zM656.1 175.6h3.2v6.2h-3.2zM664 175.6h3.2v6.2h-3.2zM671.9 175.6h3.2v6.2h-3.2zM679.8 175.6h3.2v6.2h-3.2zM687.7 175.6h3.2v6.2h-3.2zM695.6 175.6h3.2v6.2h-3.2zM703.5 175.6h3.2v6.2h-3.2zM711.4 175.6h3.2v6.2h-3.2zM719.3 175.6h3.2v6.2h-3.2zM727.2 175.6h3.2v6.2h-3.2zM735.1 175.6h3.2v6.2h-3.2zM743 175.6h3.2v6.2h-3.2zM750.9 175.6h3.2v6.2h-3.2zM758.8 175.6h3.2v6.2h-3.2zM766.7 175.6h3.2v6.2h-3.2zM774.6 175.6h3.2v6.2h-3.2zM782.5 175.6h3.2v6.2h-3.2zM790.4 175.6h3.2v6.2h-3.2zM798.3 175.6h3.2v6.2h-3.2zM806.2 175.6h3.2v6.2h-3.2zM814.1 175.6h3.2v6.2h-3.2zM822 175.6h3.2v6.2h-3.2zM829.9 175.6h3.2v6.2h-3.2zM837.8 175.6h3.2v6.2h-3.2zM845.7 175.6h3.2v6.2h-3.2zM853.6 175.6h3.2v6.2h-3.2zM861.5 175.6h3.2v6.2h-3.2zM869.4 175.6h3.2v6.2h-3.2zM877.3 175.6h3.2v6.2h-3.2zM885.2 175.6h3.2v6.2h-3.2zM893.1 175.6h3.2v6.2h-3.2zM901 175.6h3.2v6.2h-3.2zM908.9 175.6h3.2v6.2h-3.2zM916.8 175.6h3.2v6.2h-3.2zM924.7 175.6h3.2v6.2h-3.2zM932.6 175.6h3.2v6.2h-3.2zM940.5 175.6h3.2v6.2h-3.2zM948.4 175.6h3.2v6.2h-3.2zM956.3 175.6h3.2v6.2h-3.2zM964.2 175.6h3.2v6.2h-3.2zM972.1 175.6h3.2v6.2h-3.2zM980 175.6h3.2v6.2h-3.2zM987.9 175.6h3.2v6.2h-3.2zM995.8 175.6h3.2v6.2h-3.2zM1003.7 175.6h3.2v6.2h-3.2zM1011.6 175.6h3.2v6.2h-3.2zM1019.5 175.6h3.2v6.2h-3.2zM1027.4 175.6h3.2v6.2h-3.2zM1035.3 175.6h3.2v6.2h-3.2zM1043.2 175.6h3.2v6.2h-3.2zM1051.1 175.6h3.2v6.2h-3.2zM1059 175.6h3.2v6.2h-3.2zM1066.9 175.6h3.2v6.2h-3.2zM1074.8 175.6h3.2v6.2h-3.2zM1082.7 175.6h3.2v6.2h-3.2zM1090.6 175.6h3.2v6.2h-3.2zM1098.5 175.6h3.2v6.2h-3.2zM1106.4 175.6h3.2v6.2h-3.2zM1114.3 175.6h3.2v6.2h-3.2zM1122.2 175.6h3.2v6.2h-3.2zM1130.1 175.6h3.2v6.2h-3.2zM1138 175.6h3.2v6.2h-3.2zM1145.9 175.6h3.2v6.2h-3.2zM1153.8 175.6h3.2v6.2h-3.2zM1161.7 175.6h3.2v6.2h-3.2zM1169.6 175.6h3.2v6.2h-3.2zM1177.5 175.6h3.2v6.2h-3.2zM1185.4 175.6h3.2v6.2h-3.2zM1193.3 175.6h3.2v6.2h-3.2zM1201.2 175.6h3.2v6.2h-3.2zM1209.1 175.6h3.2v6.2h-3.2zM1217 175.6h3.2v6.2h-3.2zM1224.9 175.6h3.2v6.2h-3.2zM1232.8 175.6h3.2v6.2h-3.2zM1240.7 175.6h3.2v6.2h-3.2zM1248.6 175.6h3.2v6.2h-3.2zM1256.5 175.6h3.2v6.2h-3.2zM1264.4 175.6h3.2v6.2h-3.2zM1272.3 175.6h3.2v6.2h-3.2z" fill="#763626"/>
<rect x="583" y="624.6" width="696" height="5.6" fill="#4a2018"/><rect x="583" y="627" width="696" height="0.9" fill="#7c4226"/>
<path d="M585 622.5h3.2v3.6h-3.2zM592.9 622.5h3.2v3.6h-3.2zM600.8 622.5h3.2v3.6h-3.2zM608.7 622.5h3.2v3.6h-3.2zM616.6 622.5h3.2v3.6h-3.2zM624.5 622.5h3.2v3.6h-3.2zM632.4 622.5h3.2v3.6h-3.2zM640.3 622.5h3.2v3.6h-3.2zM648.2 622.5h3.2v3.6h-3.2zM656.1 622.5h3.2v3.6h-3.2zM664 622.5h3.2v3.6h-3.2zM671.9 622.5h3.2v3.6h-3.2zM679.8 622.5h3.2v3.6h-3.2zM687.7 622.5h3.2v3.6h-3.2zM695.6 622.5h3.2v3.6h-3.2zM703.5 622.5h3.2v3.6h-3.2zM711.4 622.5h3.2v3.6h-3.2zM719.3 622.5h3.2v3.6h-3.2zM727.2 622.5h3.2v3.6h-3.2zM735.1 622.5h3.2v3.6h-3.2zM743 622.5h3.2v3.6h-3.2zM750.9 622.5h3.2v3.6h-3.2zM758.8 622.5h3.2v3.6h-3.2zM766.7 622.5h3.2v3.6h-3.2zM774.6 622.5h3.2v3.6h-3.2zM782.5 622.5h3.2v3.6h-3.2zM790.4 622.5h3.2v3.6h-3.2zM798.3 622.5h3.2v3.6h-3.2zM806.2 622.5h3.2v3.6h-3.2zM814.1 622.5h3.2v3.6h-3.2zM822 622.5h3.2v3.6h-3.2zM829.9 622.5h3.2v3.6h-3.2zM837.8 622.5h3.2v3.6h-3.2zM845.7 622.5h3.2v3.6h-3.2zM853.6 622.5h3.2v3.6h-3.2zM861.5 622.5h3.2v3.6h-3.2zM869.4 622.5h3.2v3.6h-3.2zM877.3 622.5h3.2v3.6h-3.2zM885.2 622.5h3.2v3.6h-3.2zM893.1 622.5h3.2v3.6h-3.2zM901 622.5h3.2v3.6h-3.2zM908.9 622.5h3.2v3.6h-3.2zM916.8 622.5h3.2v3.6h-3.2zM924.7 622.5h3.2v3.6h-3.2zM932.6 622.5h3.2v3.6h-3.2zM940.5 622.5h3.2v3.6h-3.2zM948.4 622.5h3.2v3.6h-3.2zM956.3 622.5h3.2v3.6h-3.2zM964.2 622.5h3.2v3.6h-3.2zM972.1 622.5h3.2v3.6h-3.2zM980 622.5h3.2v3.6h-3.2zM987.9 622.5h3.2v3.6h-3.2zM995.8 622.5h3.2v3.6h-3.2zM1003.7 622.5h3.2v3.6h-3.2zM1011.6 622.5h3.2v3.6h-3.2zM1019.5 622.5h3.2v3.6h-3.2zM1027.4 622.5h3.2v3.6h-3.2zM1035.3 622.5h3.2v3.6h-3.2zM1043.2 622.5h3.2v3.6h-3.2zM1051.1 622.5h3.2v3.6h-3.2zM1059 622.5h3.2v3.6h-3.2zM1066.9 622.5h3.2v3.6h-3.2zM1074.8 622.5h3.2v3.6h-3.2zM1082.7 622.5h3.2v3.6h-3.2zM1090.6 622.5h3.2v3.6h-3.2zM1098.5 622.5h3.2v3.6h-3.2zM1106.4 622.5h3.2v3.6h-3.2zM1114.3 622.5h3.2v3.6h-3.2zM1122.2 622.5h3.2v3.6h-3.2zM1130.1 622.5h3.2v3.6h-3.2zM1138 622.5h3.2v3.6h-3.2zM1145.9 622.5h3.2v3.6h-3.2zM1153.8 622.5h3.2v3.6h-3.2zM1161.7 622.5h3.2v3.6h-3.2zM1169.6 622.5h3.2v3.6h-3.2zM1177.5 622.5h3.2v3.6h-3.2zM1185.4 622.5h3.2v3.6h-3.2zM1193.3 622.5h3.2v3.6h-3.2zM1201.2 622.5h3.2v3.6h-3.2zM1209.1 622.5h3.2v3.6h-3.2zM1217 622.5h3.2v3.6h-3.2zM1224.9 622.5h3.2v3.6h-3.2zM1232.8 622.5h3.2v3.6h-3.2zM1240.7 622.5h3.2v3.6h-3.2zM1248.6 622.5h3.2v3.6h-3.2zM1256.5 622.5h3.2v3.6h-3.2zM1264.4 622.5h3.2v3.6h-3.2zM1272.3 622.5h3.2v3.6h-3.2z" fill="#ac5e2c"/><path d="M585 626.1h3.2v6.2h-3.2zM592.9 626.1h3.2v6.2h-3.2zM600.8 626.1h3.2v6.2h-3.2zM608.7 626.1h3.2v6.2h-3.2zM616.6 626.1h3.2v6.2h-3.2zM624.5 626.1h3.2v6.2h-3.2zM632.4 626.1h3.2v6.2h-3.2zM640.3 626.1h3.2v6.2h-3.2zM648.2 626.1h3.2v6.2h-3.2zM656.1 626.1h3.2v6.2h-3.2zM664 626.1h3.2v6.2h-3.2zM671.9 626.1h3.2v6.2h-3.2zM679.8 626.1h3.2v6.2h-3.2zM687.7 626.1h3.2v6.2h-3.2zM695.6 626.1h3.2v6.2h-3.2zM703.5 626.1h3.2v6.2h-3.2zM711.4 626.1h3.2v6.2h-3.2zM719.3 626.1h3.2v6.2h-3.2zM727.2 626.1h3.2v6.2h-3.2zM735.1 626.1h3.2v6.2h-3.2zM743 626.1h3.2v6.2h-3.2zM750.9 626.1h3.2v6.2h-3.2zM758.8 626.1h3.2v6.2h-3.2zM766.7 626.1h3.2v6.2h-3.2zM774.6 626.1h3.2v6.2h-3.2zM782.5 626.1h3.2v6.2h-3.2zM790.4 626.1h3.2v6.2h-3.2zM798.3 626.1h3.2v6.2h-3.2zM806.2 626.1h3.2v6.2h-3.2zM814.1 626.1h3.2v6.2h-3.2zM822 626.1h3.2v6.2h-3.2zM829.9 626.1h3.2v6.2h-3.2zM837.8 626.1h3.2v6.2h-3.2zM845.7 626.1h3.2v6.2h-3.2zM853.6 626.1h3.2v6.2h-3.2zM861.5 626.1h3.2v6.2h-3.2zM869.4 626.1h3.2v6.2h-3.2zM877.3 626.1h3.2v6.2h-3.2zM885.2 626.1h3.2v6.2h-3.2zM893.1 626.1h3.2v6.2h-3.2zM901 626.1h3.2v6.2h-3.2zM908.9 626.1h3.2v6.2h-3.2zM916.8 626.1h3.2v6.2h-3.2zM924.7 626.1h3.2v6.2h-3.2zM932.6 626.1h3.2v6.2h-3.2zM940.5 626.1h3.2v6.2h-3.2zM948.4 626.1h3.2v6.2h-3.2zM956.3 626.1h3.2v6.2h-3.2zM964.2 626.1h3.2v6.2h-3.2zM972.1 626.1h3.2v6.2h-3.2zM980 626.1h3.2v6.2h-3.2zM987.9 626.1h3.2v6.2h-3.2zM995.8 626.1h3.2v6.2h-3.2zM1003.7 626.1h3.2v6.2h-3.2zM1011.6 626.1h3.2v6.2h-3.2zM1019.5 626.1h3.2v6.2h-3.2zM1027.4 626.1h3.2v6.2h-3.2zM1035.3 626.1h3.2v6.2h-3.2zM1043.2 626.1h3.2v6.2h-3.2zM1051.1 626.1h3.2v6.2h-3.2zM1059 626.1h3.2v6.2h-3.2zM1066.9 626.1h3.2v6.2h-3.2zM1074.8 626.1h3.2v6.2h-3.2zM1082.7 626.1h3.2v6.2h-3.2zM1090.6 626.1h3.2v6.2h-3.2zM1098.5 626.1h3.2v6.2h-3.2zM1106.4 626.1h3.2v6.2h-3.2zM1114.3 626.1h3.2v6.2h-3.2zM1122.2 626.1h3.2v6.2h-3.2zM1130.1 626.1h3.2v6.2h-3.2zM1138 626.1h3.2v6.2h-3.2zM1145.9 626.1h3.2v6.2h-3.2zM1153.8 626.1h3.2v6.2h-3.2zM1161.7 626.1h3.2v6.2h-3.2zM1169.6 626.1h3.2v6.2h-3.2zM1177.5 626.1h3.2v6.2h-3.2zM1185.4 626.1h3.2v6.2h-3.2zM1193.3 626.1h3.2v6.2h-3.2zM1201.2 626.1h3.2v6.2h-3.2zM1209.1 626.1h3.2v6.2h-3.2zM1217 626.1h3.2v6.2h-3.2zM1224.9 626.1h3.2v6.2h-3.2zM1232.8 626.1h3.2v6.2h-3.2zM1240.7 626.1h3.2v6.2h-3.2zM1248.6 626.1h3.2v6.2h-3.2zM1256.5 626.1h3.2v6.2h-3.2zM1264.4 626.1h3.2v6.2h-3.2zM1272.3 626.1h3.2v6.2h-3.2z" fill="#763626"/>
<rect x="577.4" y="182" width="3.6" height="442" fill="#7d3c24"/><rect x="578.6" y="182" width="1.3" height="442" fill="#a8662e"/><path d="M576.8 187.5h4.8v2h-4.8zM576.8 195.4h4.8v2h-4.8zM576.8 203.3h4.8v2h-4.8zM576.8 211.2h4.8v2h-4.8zM576.8 219.1h4.8v2h-4.8zM576.8 227h4.8v2h-4.8zM576.8 234.9h4.8v2h-4.8zM576.8 242.8h4.8v2h-4.8zM576.8 250.7h4.8v2h-4.8zM576.8 258.6h4.8v2h-4.8zM576.8 266.5h4.8v2h-4.8zM576.8 274.4h4.8v2h-4.8zM576.8 282.3h4.8v2h-4.8zM576.8 290.2h4.8v2h-4.8zM576.8 298.1h4.8v2h-4.8zM576.8 306h4.8v2h-4.8zM576.8 313.9h4.8v2h-4.8zM576.8 321.8h4.8v2h-4.8zM576.8 329.7h4.8v2h-4.8zM576.8 337.6h4.8v2h-4.8zM576.8 345.5h4.8v2h-4.8zM576.8 353.4h4.8v2h-4.8zM576.8 361.3h4.8v2h-4.8zM576.8 369.2h4.8v2h-4.8zM576.8 377.1h4.8v2h-4.8zM576.8 385h4.8v2h-4.8zM576.8 392.9h4.8v2h-4.8zM576.8 400.8h4.8v2h-4.8zM576.8 408.7h4.8v2h-4.8zM576.8 416.6h4.8v2h-4.8zM576.8 424.5h4.8v2h-4.8zM576.8 432.4h4.8v2h-4.8zM576.8 440.3h4.8v2h-4.8zM576.8 448.2h4.8v2h-4.8zM576.8 456.1h4.8v2h-4.8zM576.8 464h4.8v2h-4.8zM576.8 471.9h4.8v2h-4.8zM576.8 479.8h4.8v2h-4.8zM576.8 487.7h4.8v2h-4.8zM576.8 495.6h4.8v2h-4.8zM576.8 503.5h4.8v2h-4.8zM576.8 511.4h4.8v2h-4.8zM576.8 519.3h4.8v2h-4.8zM576.8 527.2h4.8v2h-4.8zM576.8 535.1h4.8v2h-4.8zM576.8 543h4.8v2h-4.8zM576.8 550.9h4.8v2h-4.8zM576.8 558.8h4.8v2h-4.8zM576.8 566.7h4.8v2h-4.8zM576.8 574.6h4.8v2h-4.8zM576.8 582.5h4.8v2h-4.8zM576.8 590.4h4.8v2h-4.8zM576.8 598.3h4.8v2h-4.8zM576.8 606.2h4.8v2h-4.8zM576.8 614.1h4.8v2h-4.8zM576.8 622h4.8v2h-4.8z" fill="#5a2a1a"/>
<rect x="1280.3" y="182" width="3.6" height="442" fill="#7d3c24"/><rect x="1281.5" y="182" width="1.3" height="442" fill="#a8662e"/><path d="M1279.7 187.5h4.8v2h-4.8zM1279.7 195.4h4.8v2h-4.8zM1279.7 203.3h4.8v2h-4.8zM1279.7 211.2h4.8v2h-4.8zM1279.7 219.1h4.8v2h-4.8zM1279.7 227h4.8v2h-4.8zM1279.7 234.9h4.8v2h-4.8zM1279.7 242.8h4.8v2h-4.8zM1279.7 250.7h4.8v2h-4.8zM1279.7 258.6h4.8v2h-4.8zM1279.7 266.5h4.8v2h-4.8zM1279.7 274.4h4.8v2h-4.8zM1279.7 282.3h4.8v2h-4.8zM1279.7 290.2h4.8v2h-4.8zM1279.7 298.1h4.8v2h-4.8zM1279.7 306h4.8v2h-4.8zM1279.7 313.9h4.8v2h-4.8zM1279.7 321.8h4.8v2h-4.8zM1279.7 329.7h4.8v2h-4.8zM1279.7 337.6h4.8v2h-4.8zM1279.7 345.5h4.8v2h-4.8zM1279.7 353.4h4.8v2h-4.8zM1279.7 361.3h4.8v2h-4.8zM1279.7 369.2h4.8v2h-4.8zM1279.7 377.1h4.8v2h-4.8zM1279.7 385h4.8v2h-4.8zM1279.7 392.9h4.8v2h-4.8zM1279.7 400.8h4.8v2h-4.8zM1279.7 408.7h4.8v2h-4.8zM1279.7 416.6h4.8v2h-4.8zM1279.7 424.5h4.8v2h-4.8zM1279.7 432.4h4.8v2h-4.8zM1279.7 440.3h4.8v2h-4.8zM1279.7 448.2h4.8v2h-4.8zM1279.7 456.1h4.8v2h-4.8zM1279.7 464h4.8v2h-4.8zM1279.7 471.9h4.8v2h-4.8zM1279.7 479.8h4.8v2h-4.8zM1279.7 487.7h4.8v2h-4.8zM1279.7 495.6h4.8v2h-4.8zM1279.7 503.5h4.8v2h-4.8zM1279.7 511.4h4.8v2h-4.8zM1279.7 519.3h4.8v2h-4.8zM1279.7 527.2h4.8v2h-4.8zM1279.7 535.1h4.8v2h-4.8zM1279.7 543h4.8v2h-4.8zM1279.7 550.9h4.8v2h-4.8zM1279.7 558.8h4.8v2h-4.8zM1279.7 566.7h4.8v2h-4.8zM1279.7 574.6h4.8v2h-4.8zM1279.7 582.5h4.8v2h-4.8zM1279.7 590.4h4.8v2h-4.8zM1279.7 598.3h4.8v2h-4.8zM1279.7 606.2h4.8v2h-4.8zM1279.7 614.1h4.8v2h-4.8zM1279.7 622h4.8v2h-4.8z" fill="#5a2a1a"/>
<rect x="577.2" y="158" width="4" height="23" fill="#7d3c24"/><rect x="579.8" y="159" width="1.4" height="22" fill="#4c2118"/><rect x="577.2" y="158" width="4" height="1.6" fill="#a0522c"/>
<rect x="1280.2" y="158" width="4" height="23" fill="#7d3c24"/><rect x="1282.8" y="159" width="1.4" height="22" fill="#4c2118"/><rect x="1280.2" y="158" width="4" height="1.6" fill="#a0522c"/>
<rect x="577.2" y="608" width="4" height="23.5" fill="#7d3c24"/><rect x="579.8" y="609" width="1.4" height="22.5" fill="#4c2118"/><rect x="577.2" y="608" width="4" height="1.6" fill="#a0522c"/>
<rect x="1280.2" y="608" width="4" height="23.5" fill="#7d3c24"/><rect x="1282.8" y="609" width="1.4" height="22.5" fill="#4c2118"/><rect x="1280.2" y="608" width="4" height="1.6" fill="#a0522c"/>
<path d="M704 234.8 l2 -2 h10.4 v37.4 h101.2 v17.4 l-2 2 H706 l-2 -2Z" fill="#4f1638"/>
<path d="M705.4 235 h8 v39 h103 v13.4 H705.4Z" fill="#84302a"/>
<rect x="712" y="269.6" width="99.1" height="3.5" fill="#a98538"/>
<path d="M713 271.6 h97.1" stroke="#8a6a2c" stroke-width="1" stroke-dasharray="1.5 3.5" fill="none"/>
<path d="M706 277.6 L708.3 276 L710.6 279.2 L712.9 276 L715.2 279.2 L717.5 276 L719.8 279.2 L722.1 276 L724.4 279.2 L726.7 276 L729 279.2 L731.3 276 L733.6 279.2 L735.9 276 L738.2 279.2 L740.5 276 L742.8 279.2 L745.1 276 L747.4 279.2 L749.7 276 L752 279.2 L754.3 276 L756.6 279.2 L758.9 276 L761.2 279.2 L763.5 276 L765.8 279.2 L768.1 276 L770.4 279.2 L772.7 276 L775 279.2 L777.3 276 L779.6 279.2 L781.9 276 L784.2 279.2 L786.5 276 L788.8 279.2 L791.1 276 L793.4 279.2 L795.7 276 L798 279.2 L800.3 276 L802.6 279.2 L804.9 276 L807.2 279.2 L809.5 276 L811.8 279.2 L814.1 276 L815.6 279.2" stroke="#581a38" stroke-width="1.3" fill="none" shape-rendering="auto"/>
<path d="M706 282.4 L708.3 280.2 L710.6 284.6 L712.9 280.2 L715.2 284.6 L717.5 280.2 L719.8 284.6 L722.1 280.2 L724.4 284.6 L726.7 280.2 L729 284.6 L731.3 280.2 L733.6 284.6 L735.9 280.2 L738.2 284.6 L740.5 280.2 L742.8 284.6 L745.1 280.2 L747.4 284.6 L749.7 280.2 L752 284.6 L754.3 280.2 L756.6 284.6 L758.9 280.2 L761.2 284.6 L763.5 280.2 L765.8 284.6 L768.1 280.2 L770.4 284.6 L772.7 280.2 L775 284.6 L777.3 280.2 L779.6 284.6 L781.9 280.2 L784.2 284.6 L786.5 280.2 L788.8 284.6 L791.1 280.2 L793.4 284.6 L795.7 280.2 L798 284.6 L800.3 280.2 L802.6 284.6 L804.9 280.2 L807.2 284.6 L809.5 280.2 L811.8 284.6 L814.1 280.2 L815.6 284.6" stroke="#4f1638" stroke-width="1.9" fill="none" shape-rendering="auto"/>
<path d="M706 286.2 L708.3 284.4 L710.6 288 L712.9 284.4 L715.2 288 L717.5 284.4 L719.8 288 L722.1 284.4 L724.4 288 L726.7 284.4 L729 288 L731.3 284.4 L733.6 288 L735.9 284.4 L738.2 288 L740.5 284.4 L742.8 288 L745.1 284.4 L747.4 288 L749.7 284.4 L752 288 L754.3 284.4 L756.6 288 L758.9 284.4 L761.2 288 L763.5 284.4 L765.8 288 L768.1 284.4 L770.4 288 L772.7 284.4 L775 288 L777.3 284.4 L779.6 288 L781.9 284.4 L784.2 288 L786.5 284.4 L788.8 288 L791.1 284.4 L793.4 288 L795.7 284.4 L798 288 L800.3 284.4 L802.6 288 L804.9 284.4 L807.2 288 L809.5 284.4 L811.8 288 L814.1 284.4 L815.6 288" stroke="#84302a" stroke-width="1.2" fill="none" shape-rendering="auto"/>
<path d="M706 238.3h3.9M708.5 242.2h3.9M706 246.1h3.9M708.5 250h3.9M706 253.9h3.9M708.5 257.8h3.9M706 261.7h3.9M708.5 265.6h3.9M706 269.5h3.9" stroke="#581a38" stroke-width="1.2" fill="none"/>
<rect x="719.5" y="235.6" width="4" height="31.8" fill="#7d3c24"/><rect x="722.1" y="236.6" width="1.4" height="30.8" fill="#4c2118"/><rect x="719.5" y="235.6" width="4" height="1.6" fill="#a0522c"/>
<rect x="726.2" y="260.8" width="84.5" height="1.9" fill="#5a2a1c"/><rect x="726.2" y="264.4" width="84.5" height="1.9" fill="#5a2a1c"/>
<path d="M728.2 258.2h3.3v10.4h-3.3zM736.1 258.2h3.3v10.4h-3.3zM744 258.2h3.3v10.4h-3.3zM751.9 258.2h3.3v10.4h-3.3zM759.8 258.2h3.3v10.4h-3.3zM767.7 258.2h3.3v10.4h-3.3zM775.6 258.2h3.3v10.4h-3.3zM783.5 258.2h3.3v10.4h-3.3zM791.4 258.2h3.3v10.4h-3.3zM799.3 258.2h3.3v10.4h-3.3zM807.2 258.2h3.3v10.4h-3.3z" fill="#8c4a28"/>
<path d="M748 288.4 v-6.4 q0 -4.2 4.9 -4.2 q4.9 0 4.9 4.2 v6.4z" fill="#74246a" shape-rendering="auto"/><rect x="751" y="281.8" width="1.2" height="1.2" fill="#a44a9a"/><rect x="754" y="284.2" width="1.2" height="1.2" fill="#a44a9a"/><rect x="752.2" y="285.8" width="1.2" height="1.2" fill="#9a3e8e"/>
<rect x="736.8" y="279" width="5" height="5.4" rx="2" fill="#e8e8e8" shape-rendering="auto"/><rect x="737.8" y="282" width="3" height="2.6" fill="#e0b49a"/><rect x="736.2" y="284.4" width="6.4" height="7" fill="#2c2c2e"/><rect x="738.8" y="285.4" width="1.3" height="5" fill="#4a9a3c"/><rect x="737.1" y="291.4" width="1.8" height="3.4" fill="#1e2622"/><rect x="739.8" y="291.4" width="1.8" height="3.4" fill="#1e2622"/>
<path d="M1122.7 290.5 l2 -2 h10.4 v37 h85.4 v17.5 l-2 2 H1124.7 l-2 -2Z" fill="#4f1638"/>
<path d="M1124.1 290.7 h8 v38.6 h87.2 v13.5 H1124.1Z" fill="#84302a"/>
<rect x="1130.7" y="324.9" width="83.3" height="3.5" fill="#a98538"/>
<path d="M1131.7 326.9 h81.3" stroke="#8a6a2c" stroke-width="1" stroke-dasharray="1.5 3.5" fill="none"/>
<path d="M1124.7 332.9 L1127 331.3 L1129.3 334.5 L1131.6 331.3 L1133.9 334.5 L1136.2 331.3 L1138.5 334.5 L1140.8 331.3 L1143.1 334.5 L1145.4 331.3 L1147.7 334.5 L1150 331.3 L1152.3 334.5 L1154.6 331.3 L1156.9 334.5 L1159.2 331.3 L1161.5 334.5 L1163.8 331.3 L1166.1 334.5 L1168.4 331.3 L1170.7 334.5 L1173 331.3 L1175.3 334.5 L1177.6 331.3 L1179.9 334.5 L1182.2 331.3 L1184.5 334.5 L1186.8 331.3 L1189.1 334.5 L1191.4 331.3 L1193.7 334.5 L1196 331.3 L1198.3 334.5 L1200.6 331.3 L1202.9 334.5 L1205.2 331.3 L1207.5 334.5 L1209.8 331.3 L1212.1 334.5 L1214.4 331.3 L1216.7 334.5 L1218.5 331.3" stroke="#581a38" stroke-width="1.3" fill="none" shape-rendering="auto"/>
<path d="M1124.7 337.7 L1127 335.5 L1129.3 339.9 L1131.6 335.5 L1133.9 339.9 L1136.2 335.5 L1138.5 339.9 L1140.8 335.5 L1143.1 339.9 L1145.4 335.5 L1147.7 339.9 L1150 335.5 L1152.3 339.9 L1154.6 335.5 L1156.9 339.9 L1159.2 335.5 L1161.5 339.9 L1163.8 335.5 L1166.1 339.9 L1168.4 335.5 L1170.7 339.9 L1173 335.5 L1175.3 339.9 L1177.6 335.5 L1179.9 339.9 L1182.2 335.5 L1184.5 339.9 L1186.8 335.5 L1189.1 339.9 L1191.4 335.5 L1193.7 339.9 L1196 335.5 L1198.3 339.9 L1200.6 335.5 L1202.9 339.9 L1205.2 335.5 L1207.5 339.9 L1209.8 335.5 L1212.1 339.9 L1214.4 335.5 L1216.7 339.9 L1218.5 335.5" stroke="#4f1638" stroke-width="1.9" fill="none" shape-rendering="auto"/>
<path d="M1124.7 341.6 L1127 339.8 L1129.3 343.4 L1131.6 339.8 L1133.9 343.4 L1136.2 339.8 L1138.5 343.4 L1140.8 339.8 L1143.1 343.4 L1145.4 339.8 L1147.7 343.4 L1150 339.8 L1152.3 343.4 L1154.6 339.8 L1156.9 343.4 L1159.2 339.8 L1161.5 343.4 L1163.8 339.8 L1166.1 343.4 L1168.4 339.8 L1170.7 343.4 L1173 339.8 L1175.3 343.4 L1177.6 339.8 L1179.9 343.4 L1182.2 339.8 L1184.5 343.4 L1186.8 339.8 L1189.1 343.4 L1191.4 339.8 L1193.7 343.4 L1196 339.8 L1198.3 343.4 L1200.6 339.8 L1202.9 343.4 L1205.2 339.8 L1207.5 343.4 L1209.8 339.8 L1212.1 343.4 L1214.4 339.8 L1216.7 343.4 L1218.5 339.8" stroke="#84302a" stroke-width="1.2" fill="none" shape-rendering="auto"/>
<path d="M1124.7 294h3.9M1127.2 297.9h3.9M1124.7 301.8h3.9M1127.2 305.7h3.9M1124.7 309.6h3.9M1127.2 313.5h3.9M1124.7 317.4h3.9M1127.2 321.3h3.9M1124.7 325.2h3.9" stroke="#581a38" stroke-width="1.2" fill="none"/>
<rect x="1137.6" y="291" width="4" height="31.8" fill="#7d3c24"/><rect x="1140.2" y="292" width="1.4" height="30.8" fill="#4c2118"/><rect x="1137.6" y="291" width="4" height="1.6" fill="#a0522c"/>
<rect x="1144.5" y="316.2" width="68.3" height="1.9" fill="#5a2a1c"/><rect x="1144.5" y="319.8" width="68.3" height="1.9" fill="#5a2a1c"/>
<path d="M1146.5 313.6h3.3v10.4h-3.3zM1154.4 313.6h3.3v10.4h-3.3zM1162.3 313.6h3.3v10.4h-3.3zM1170.2 313.6h3.3v10.4h-3.3zM1178.1 313.6h3.3v10.4h-3.3zM1186 313.6h3.3v10.4h-3.3zM1193.9 313.6h3.3v10.4h-3.3zM1201.8 313.6h3.3v10.4h-3.3zM1209.7 313.6h3.3v10.4h-3.3z" fill="#8c4a28"/>
<path d="M1159 344 v-6.4 q0 -4.2 4.9 -4.2 q4.9 0 4.9 4.2 v6.4z" fill="#74246a" shape-rendering="auto"/><rect x="1162" y="337.4" width="1.2" height="1.2" fill="#a44a9a"/><rect x="1165" y="339.8" width="1.2" height="1.2" fill="#a44a9a"/><rect x="1163.2" y="341.4" width="1.2" height="1.2" fill="#9a3e8e"/>
<rect x="1174.4" y="334.4" width="5" height="5.4" rx="2" fill="#e8e8e8" shape-rendering="auto"/><rect x="1175.4" y="337.4" width="3" height="2.6" fill="#e0b49a"/><rect x="1173.8" y="339.8" width="6.4" height="7" fill="#2c2c2e"/><rect x="1176.4" y="340.8" width="1.3" height="5" fill="#c8c8c8"/><rect x="1174.7" y="346.8" width="1.8" height="3.4" fill="#1e2622"/><rect x="1177.4" y="346.8" width="1.8" height="3.4" fill="#1e2622"/>
<path d="M728 518 l2 -2 h10.4 v29.2 h67.8 v18.6 l-2 2 H730 l-2 -2Z" fill="#4f1638"/>
<path d="M729.4 518.2 h8 v30.8 h69.6 v14.6 H729.4Z" fill="#84302a"/>
<rect x="736" y="544.6" width="65.7" height="3.5" fill="#a98538"/>
<path d="M737 546.6 h63.7" stroke="#8a6a2c" stroke-width="1" stroke-dasharray="1.5 3.5" fill="none"/>
<path d="M730 552.6 L732.3 551 L734.6 554.2 L736.9 551 L739.2 554.2 L741.5 551 L743.8 554.2 L746.1 551 L748.4 554.2 L750.7 551 L753 554.2 L755.3 551 L757.6 554.2 L759.9 551 L762.2 554.2 L764.5 551 L766.8 554.2 L769.1 551 L771.4 554.2 L773.7 551 L776 554.2 L778.3 551 L780.6 554.2 L782.9 551 L785.2 554.2 L787.5 551 L789.8 554.2 L792.1 551 L794.4 554.2 L796.7 551 L799 554.2 L801.3 551 L803.6 554.2 L805.9 551 L806.2 554.2" stroke="#581a38" stroke-width="1.3" fill="none" shape-rendering="auto"/>
<path d="M730 557.4 L732.3 555.2 L734.6 559.6 L736.9 555.2 L739.2 559.6 L741.5 555.2 L743.8 559.6 L746.1 555.2 L748.4 559.6 L750.7 555.2 L753 559.6 L755.3 555.2 L757.6 559.6 L759.9 555.2 L762.2 559.6 L764.5 555.2 L766.8 559.6 L769.1 555.2 L771.4 559.6 L773.7 555.2 L776 559.6 L778.3 555.2 L780.6 559.6 L782.9 555.2 L785.2 559.6 L787.5 555.2 L789.8 559.6 L792.1 555.2 L794.4 559.6 L796.7 555.2 L799 559.6 L801.3 555.2 L803.6 559.6 L805.9 555.2 L806.2 559.6" stroke="#4f1638" stroke-width="1.9" fill="none" shape-rendering="auto"/>
<path d="M730 562.4 L732.3 560.6 L734.6 564.2 L736.9 560.6 L739.2 564.2 L741.5 560.6 L743.8 564.2 L746.1 560.6 L748.4 564.2 L750.7 560.6 L753 564.2 L755.3 560.6 L757.6 564.2 L759.9 560.6 L762.2 564.2 L764.5 560.6 L766.8 564.2 L769.1 560.6 L771.4 564.2 L773.7 560.6 L776 564.2 L778.3 560.6 L780.6 564.2 L782.9 560.6 L785.2 564.2 L787.5 560.6 L789.8 564.2 L792.1 560.6 L794.4 564.2 L796.7 560.6 L799 564.2 L801.3 560.6 L803.6 564.2 L805.9 560.6 L806.2 564.2" stroke="#84302a" stroke-width="1.2" fill="none" shape-rendering="auto"/>
<path d="M730 521.5h3.9M732.5 525.4h3.9M730 529.3h3.9M732.5 533.2h3.9M730 537.1h3.9M732.5 541h3.9M730 544.9h3.9" stroke="#581a38" stroke-width="1.2" fill="none"/>
<rect x="743" y="511" width="4" height="33.4" fill="#7d3c24"/><rect x="745.6" y="512" width="1.4" height="32.4" fill="#4c2118"/><rect x="743" y="511" width="4" height="1.6" fill="#a0522c"/>
<rect x="749.4" y="536.8" width="53.3" height="1.9" fill="#5a2a1c"/><rect x="749.4" y="540.4" width="53.3" height="1.9" fill="#5a2a1c"/>
<path d="M751.4 534.2h3.3v10.4h-3.3zM759.3 534.2h3.3v10.4h-3.3zM767.2 534.2h3.3v10.4h-3.3zM775.1 534.2h3.3v10.4h-3.3zM783 534.2h3.3v10.4h-3.3zM790.9 534.2h3.3v10.4h-3.3zM798.8 534.2h3.3v10.4h-3.3z" fill="#8c4a28"/>
<rect x="798.6" y="511" width="4" height="33.4" fill="#7d3c24"/><rect x="801.2" y="512" width="1.4" height="32.4" fill="#4c2118"/><rect x="798.6" y="511" width="4" height="1.6" fill="#a0522c"/>
<path d="M756.5 565.2 v-6.4 q0 -4.2 4.9 -4.2 q4.9 0 4.9 4.2 v6.4z" fill="#74246a" shape-rendering="auto"/><rect x="759.5" y="558.6" width="1.2" height="1.2" fill="#a44a9a"/><rect x="762.5" y="561" width="1.2" height="1.2" fill="#a44a9a"/><rect x="760.7" y="562.6" width="1.2" height="1.2" fill="#9a3e8e"/>
<rect x="745" y="557" width="5" height="5.4" rx="2" fill="#1c1c22" shape-rendering="auto"/><rect x="746" y="560" width="3" height="2.6" fill="#e0b49a"/><rect x="744.4" y="562.4" width="6.4" height="7" fill="#2f4a48"/><rect x="747" y="563.4" width="1.3" height="5" fill="#3a6a5a"/><rect x="745.3" y="569.4" width="1.8" height="3.4" fill="#1e2622"/><rect x="748" y="569.4" width="1.8" height="3.4" fill="#1e2622"/>
<path d="M1092 510.5 l2 -2 h10.4 v36.7 h83.1 v18.6 l-2 2 H1094 l-2 -2Z" fill="#4f1638"/>
<path d="M1093.4 510.7 h8 v38.3 h84.9 v14.6 H1093.4Z" fill="#84302a"/>
<rect x="1100" y="544.6" width="81" height="3.5" fill="#a98538"/>
<path d="M1101 546.6 h79" stroke="#8a6a2c" stroke-width="1" stroke-dasharray="1.5 3.5" fill="none"/>
<path d="M1094 552.6 L1096.3 551 L1098.6 554.2 L1100.9 551 L1103.2 554.2 L1105.5 551 L1107.8 554.2 L1110.1 551 L1112.4 554.2 L1114.7 551 L1117 554.2 L1119.3 551 L1121.6 554.2 L1123.9 551 L1126.2 554.2 L1128.5 551 L1130.8 554.2 L1133.1 551 L1135.4 554.2 L1137.7 551 L1140 554.2 L1142.3 551 L1144.6 554.2 L1146.9 551 L1149.2 554.2 L1151.5 551 L1153.8 554.2 L1156.1 551 L1158.4 554.2 L1160.7 551 L1163 554.2 L1165.3 551 L1167.6 554.2 L1169.9 551 L1172.2 554.2 L1174.5 551 L1176.8 554.2 L1179.1 551 L1181.4 554.2 L1183.7 551 L1185.5 554.2" stroke="#581a38" stroke-width="1.3" fill="none" shape-rendering="auto"/>
<path d="M1094 557.4 L1096.3 555.2 L1098.6 559.6 L1100.9 555.2 L1103.2 559.6 L1105.5 555.2 L1107.8 559.6 L1110.1 555.2 L1112.4 559.6 L1114.7 555.2 L1117 559.6 L1119.3 555.2 L1121.6 559.6 L1123.9 555.2 L1126.2 559.6 L1128.5 555.2 L1130.8 559.6 L1133.1 555.2 L1135.4 559.6 L1137.7 555.2 L1140 559.6 L1142.3 555.2 L1144.6 559.6 L1146.9 555.2 L1149.2 559.6 L1151.5 555.2 L1153.8 559.6 L1156.1 555.2 L1158.4 559.6 L1160.7 555.2 L1163 559.6 L1165.3 555.2 L1167.6 559.6 L1169.9 555.2 L1172.2 559.6 L1174.5 555.2 L1176.8 559.6 L1179.1 555.2 L1181.4 559.6 L1183.7 555.2 L1185.5 559.6" stroke="#4f1638" stroke-width="1.9" fill="none" shape-rendering="auto"/>
<path d="M1094 562.4 L1096.3 560.6 L1098.6 564.2 L1100.9 560.6 L1103.2 564.2 L1105.5 560.6 L1107.8 564.2 L1110.1 560.6 L1112.4 564.2 L1114.7 560.6 L1117 564.2 L1119.3 560.6 L1121.6 564.2 L1123.9 560.6 L1126.2 564.2 L1128.5 560.6 L1130.8 564.2 L1133.1 560.6 L1135.4 564.2 L1137.7 560.6 L1140 564.2 L1142.3 560.6 L1144.6 564.2 L1146.9 560.6 L1149.2 564.2 L1151.5 560.6 L1153.8 564.2 L1156.1 560.6 L1158.4 564.2 L1160.7 560.6 L1163 564.2 L1165.3 560.6 L1167.6 564.2 L1169.9 560.6 L1172.2 564.2 L1174.5 560.6 L1176.8 564.2 L1179.1 560.6 L1181.4 564.2 L1183.7 560.6 L1185.5 564.2" stroke="#84302a" stroke-width="1.2" fill="none" shape-rendering="auto"/>
<path d="M1094 514h3.9M1096.5 517.9h3.9M1094 521.8h3.9M1096.5 525.7h3.9M1094 529.6h3.9M1096.5 533.5h3.9M1094 537.4h3.9M1096.5 541.3h3.9M1094 545.2h3.9" stroke="#581a38" stroke-width="1.2" fill="none"/>
<rect x="1106.2" y="511" width="4" height="33.4" fill="#7d3c24"/><rect x="1108.8" y="512" width="1.4" height="32.4" fill="#4c2118"/><rect x="1106.2" y="511" width="4" height="1.6" fill="#a0522c"/>
<rect x="1112" y="536.8" width="68" height="1.9" fill="#5a2a1c"/><rect x="1112" y="540.4" width="68" height="1.9" fill="#5a2a1c"/>
<path d="M1114 534.2h3.3v10.4h-3.3zM1121.9 534.2h3.3v10.4h-3.3zM1129.8 534.2h3.3v10.4h-3.3zM1137.7 534.2h3.3v10.4h-3.3zM1145.6 534.2h3.3v10.4h-3.3zM1153.5 534.2h3.3v10.4h-3.3zM1161.4 534.2h3.3v10.4h-3.3zM1169.3 534.2h3.3v10.4h-3.3zM1177.2 534.2h3.3v10.4h-3.3z" fill="#8c4a28"/>
<rect x="1178" y="503.5" width="4" height="40.9" fill="#7d3c24"/><rect x="1180.6" y="504.5" width="1.4" height="39.9" fill="#4c2118"/><rect x="1178" y="503.5" width="4" height="1.6" fill="#a0522c"/>
<path d="M1127.5 564.8 v-6.4 q0 -4.2 4.9 -4.2 q4.9 0 4.9 4.2 v6.4z" fill="#74246a" shape-rendering="auto"/><rect x="1130.5" y="558.2" width="1.2" height="1.2" fill="#a44a9a"/><rect x="1133.5" y="560.6" width="1.2" height="1.2" fill="#a44a9a"/><rect x="1131.7" y="562.2" width="1.2" height="1.2" fill="#9a3e8e"/>
<rect x="1143.4" y="555.8" width="5" height="5.4" rx="2" fill="#2a3a3a" shape-rendering="auto"/><rect x="1144.4" y="558.8" width="3" height="2.6" fill="#e0b49a"/><rect x="1142.8" y="561.2" width="6.4" height="7" fill="#2c3a34"/><rect x="1145.4" y="562.2" width="1.3" height="5" fill="#3f8a4a"/><rect x="1143.7" y="568.2" width="1.8" height="3.4" fill="#1e2622"/><rect x="1146.4" y="568.2" width="1.8" height="3.4" fill="#1e2622"/>
<rect x="864.6" y="458.5" width="4.4" height="4.6" rx="1.5" fill="#78c828"/><rect x="864.6" y="463" width="4.6" height="4.6" fill="#3f9a2a"/><rect x="868.6" y="458.5" width="1" height="3" fill="#c82828"/>
<path d="M664.2 282.9 h10.6" stroke="#c49444" stroke-width="1.2" fill="none"/><path d="M663.6 281.3 l0.8 -2.6 l-0.4 -1.8 l1.8 -0.6 l0.2 -2 l1.8 0.2 l1 -2.2 l1.6 1 l1.8 -1.2 l0.8 2 l1.8 -0.2 l-0.2 2.2 l1.6 1 l-0.8 1.8 l0.8 2.2 l-2 1 h-8.6z" fill="#5e5a22"/><path d="M666.4 278.1 q0.4 -3.8 3.2 -4 q3 0.2 3.2 3.6 q-0.6 2.2 -3.4 2.2 q-2.6 0 -3 -1.8z" fill="#7e7630"/><path d="M664.8 282.1 h2.2 M668.6 282.3 h2 M672 282.1 h2" stroke="#4a3216" stroke-width="1" fill="none"/>
<path d="M632.3 322.7 h10.6" stroke="#c49444" stroke-width="1.2" fill="none"/><path d="M631.7 321.1 l0.8 -2.6 l-0.4 -1.8 l1.8 -0.6 l0.2 -2 l1.8 0.2 l1 -2.2 l1.6 1 l1.8 -1.2 l0.8 2 l1.8 -0.2 l-0.2 2.2 l1.6 1 l-0.8 1.8 l0.8 2.2 l-2 1 h-8.6z" fill="#5e5a22"/><path d="M634.5 317.9 q0.4 -3.8 3.2 -4 q3 0.2 3.2 3.6 q-0.6 2.2 -3.4 2.2 q-2.6 0 -3 -1.8z" fill="#7e7630"/><path d="M632.9 321.9 h2.2 M636.7 322.1 h2 M640.1 321.9 h2" stroke="#4a3216" stroke-width="1" fill="none"/>
<path d="M632.6 370.2 h10.6" stroke="#c49444" stroke-width="1.2" fill="none"/><path d="M632 368.6 l0.8 -2.6 l-0.4 -1.8 l1.8 -0.6 l0.2 -2 l1.8 0.2 l1 -2.2 l1.6 1 l1.8 -1.2 l0.8 2 l1.8 -0.2 l-0.2 2.2 l1.6 1 l-0.8 1.8 l0.8 2.2 l-2 1 h-8.6z" fill="#5e5a22"/><path d="M634.8 365.4 q0.4 -3.8 3.2 -4 q3 0.2 3.2 3.6 q-0.6 2.2 -3.4 2.2 q-2.6 0 -3 -1.8z" fill="#7e7630"/><path d="M633.2 369.4 h2.2 M637 369.6 h2 M640.4 369.4 h2" stroke="#4a3216" stroke-width="1" fill="none"/>
<path d="M822.1 290.6 h10.6" stroke="#c49444" stroke-width="1.2" fill="none"/><path d="M821.5 289 l0.8 -2.6 l-0.4 -1.8 l1.8 -0.6 l0.2 -2 l1.8 0.2 l1 -2.2 l1.6 1 l1.8 -1.2 l0.8 2 l1.8 -0.2 l-0.2 2.2 l1.6 1 l-0.8 1.8 l0.8 2.2 l-2 1 h-8.6z" fill="#5e5a22"/><path d="M824.3 285.8 q0.4 -3.8 3.2 -4 q3 0.2 3.2 3.6 q-0.6 2.2 -3.4 2.2 q-2.6 0 -3 -1.8z" fill="#7e7630"/><path d="M822.7 289.8 h2.2 M826.5 290 h2 M829.9 289.8 h2" stroke="#4a3216" stroke-width="1" fill="none"/>
<path d="M774.8 378 h10.6" stroke="#c49444" stroke-width="1.2" fill="none"/><path d="M774.2 376.4 l0.8 -2.6 l-0.4 -1.8 l1.8 -0.6 l0.2 -2 l1.8 0.2 l1 -2.2 l1.6 1 l1.8 -1.2 l0.8 2 l1.8 -0.2 l-0.2 2.2 l1.6 1 l-0.8 1.8 l0.8 2.2 l-2 1 h-8.6z" fill="#5e5a22"/><path d="M777 373.2 q0.4 -3.8 3.2 -4 q3 0.2 3.2 3.6 q-0.6 2.2 -3.4 2.2 q-2.6 0 -3 -1.8z" fill="#7e7630"/><path d="M775.4 377.2 h2.2 M779.2 377.4 h2 M782.6 377.2 h2" stroke="#4a3216" stroke-width="1" fill="none"/>
<path d="M909.2 354.2 h10.6" stroke="#c49444" stroke-width="1.2" fill="none"/><path d="M908.6 352.6 l0.8 -2.6 l-0.4 -1.8 l1.8 -0.6 l0.2 -2 l1.8 0.2 l1 -2.2 l1.6 1 l1.8 -1.2 l0.8 2 l1.8 -0.2 l-0.2 2.2 l1.6 1 l-0.8 1.8 l0.8 2.2 l-2 1 h-8.6z" fill="#5e5a22"/><path d="M911.4 349.4 q0.4 -3.8 3.2 -4 q3 0.2 3.2 3.6 q-0.6 2.2 -3.4 2.2 q-2.6 0 -3 -1.8z" fill="#7e7630"/><path d="M909.8 353.4 h2.2 M913.6 353.6 h2 M917 353.4 h2" stroke="#4a3216" stroke-width="1" fill="none"/>
<path d="M845.7 385.7 h10.6" stroke="#c49444" stroke-width="1.2" fill="none"/><path d="M845.1 384.1 l0.8 -2.6 l-0.4 -1.8 l1.8 -0.6 l0.2 -2 l1.8 0.2 l1 -2.2 l1.6 1 l1.8 -1.2 l0.8 2 l1.8 -0.2 l-0.2 2.2 l1.6 1 l-0.8 1.8 l0.8 2.2 l-2 1 h-8.6z" fill="#5e5a22"/><path d="M847.9 380.9 q0.4 -3.8 3.2 -4 q3 0.2 3.2 3.6 q-0.6 2.2 -3.4 2.2 q-2.6 0 -3 -1.8z" fill="#7e7630"/><path d="M846.3 384.9 h2.2 M850.1 385.1 h2 M853.5 384.9 h2" stroke="#4a3216" stroke-width="1" fill="none"/>
<path d="M948.6 290.6 h10.6" stroke="#c49444" stroke-width="1.2" fill="none"/><path d="M948 289 l0.8 -2.6 l-0.4 -1.8 l1.8 -0.6 l0.2 -2 l1.8 0.2 l1 -2.2 l1.6 1 l1.8 -1.2 l0.8 2 l1.8 -0.2 l-0.2 2.2 l1.6 1 l-0.8 1.8 l0.8 2.2 l-2 1 h-8.6z" fill="#5e5a22"/><path d="M950.8 285.8 q0.4 -3.8 3.2 -4 q3 0.2 3.2 3.6 q-0.6 2.2 -3.4 2.2 q-2.6 0 -3 -1.8z" fill="#7e7630"/><path d="M949.2 289.8 h2.2 M953 290 h2 M956.4 289.8 h2" stroke="#4a3216" stroke-width="1" fill="none"/>
<path d="M1011.3 306 h10.6" stroke="#c49444" stroke-width="1.2" fill="none"/><path d="M1010.7 304.4 l0.8 -2.6 l-0.4 -1.8 l1.8 -0.6 l0.2 -2 l1.8 0.2 l1 -2.2 l1.6 1 l1.8 -1.2 l0.8 2 l1.8 -0.2 l-0.2 2.2 l1.6 1 l-0.8 1.8 l0.8 2.2 l-2 1 h-8.6z" fill="#5e5a22"/><path d="M1013.5 301.2 q0.4 -3.8 3.2 -4 q3 0.2 3.2 3.6 q-0.6 2.2 -3.4 2.2 q-2.6 0 -3 -1.8z" fill="#7e7630"/><path d="M1011.9 305.2 h2.2 M1015.7 305.4 h2 M1019.1 305.2 h2" stroke="#4a3216" stroke-width="1" fill="none"/>
<path d="M1082.6 338 h10.6" stroke="#c49444" stroke-width="1.2" fill="none"/><path d="M1082 336.4 l0.8 -2.6 l-0.4 -1.8 l1.8 -0.6 l0.2 -2 l1.8 0.2 l1 -2.2 l1.6 1 l1.8 -1.2 l0.8 2 l1.8 -0.2 l-0.2 2.2 l1.6 1 l-0.8 1.8 l0.8 2.2 l-2 1 h-8.6z" fill="#5e5a22"/><path d="M1084.8 333.2 q0.4 -3.8 3.2 -4 q3 0.2 3.2 3.6 q-0.6 2.2 -3.4 2.2 q-2.6 0 -3 -1.8z" fill="#7e7630"/><path d="M1083.2 337.2 h2.2 M1087 337.4 h2 M1090.4 337.2 h2" stroke="#4a3216" stroke-width="1" fill="none"/>
<path d="M1066.6 377.9 h10.6" stroke="#c49444" stroke-width="1.2" fill="none"/><path d="M1066 376.3 l0.8 -2.6 l-0.4 -1.8 l1.8 -0.6 l0.2 -2 l1.8 0.2 l1 -2.2 l1.6 1 l1.8 -1.2 l0.8 2 l1.8 -0.2 l-0.2 2.2 l1.6 1 l-0.8 1.8 l0.8 2.2 l-2 1 h-8.6z" fill="#5e5a22"/><path d="M1068.8 373.1 q0.4 -3.8 3.2 -4 q3 0.2 3.2 3.6 q-0.6 2.2 -3.4 2.2 q-2.6 0 -3 -1.8z" fill="#7e7630"/><path d="M1067.2 377.1 h2.2 M1071 377.3 h2 M1074.4 377.1 h2" stroke="#4a3216" stroke-width="1" fill="none"/>
<path d="M751.1 409.7 h10.6" stroke="#c49444" stroke-width="1.2" fill="none"/><path d="M750.5 408.1 l0.8 -2.6 l-0.4 -1.8 l1.8 -0.6 l0.2 -2 l1.8 0.2 l1 -2.2 l1.6 1 l1.8 -1.2 l0.8 2 l1.8 -0.2 l-0.2 2.2 l1.6 1 l-0.8 1.8 l0.8 2.2 l-2 1 h-8.6z" fill="#5e5a22"/><path d="M753.3 404.9 q0.4 -3.8 3.2 -4 q3 0.2 3.2 3.6 q-0.6 2.2 -3.4 2.2 q-2.6 0 -3 -1.8z" fill="#7e7630"/><path d="M751.7 408.9 h2.2 M755.5 409.1 h2 M758.9 408.9 h2" stroke="#4a3216" stroke-width="1" fill="none"/>
<path d="M782.6 424.6 h10.6" stroke="#c49444" stroke-width="1.2" fill="none"/><path d="M782 423 l0.8 -2.6 l-0.4 -1.8 l1.8 -0.6 l0.2 -2 l1.8 0.2 l1 -2.2 l1.6 1 l1.8 -1.2 l0.8 2 l1.8 -0.2 l-0.2 2.2 l1.6 1 l-0.8 1.8 l0.8 2.2 l-2 1 h-8.6z" fill="#5e5a22"/><path d="M784.8 419.8 q0.4 -3.8 3.2 -4 q3 0.2 3.2 3.6 q-0.6 2.2 -3.4 2.2 q-2.6 0 -3 -1.8z" fill="#7e7630"/><path d="M783.2 423.8 h2.2 M787 424 h2 M790.4 423.8 h2" stroke="#4a3216" stroke-width="1" fill="none"/>
<path d="M751.1 473 h10.6" stroke="#c49444" stroke-width="1.2" fill="none"/><path d="M750.5 471.4 l0.8 -2.6 l-0.4 -1.8 l1.8 -0.6 l0.2 -2 l1.8 0.2 l1 -2.2 l1.6 1 l1.8 -1.2 l0.8 2 l1.8 -0.2 l-0.2 2.2 l1.6 1 l-0.8 1.8 l0.8 2.2 l-2 1 h-8.6z" fill="#5e5a22"/><path d="M753.3 468.2 q0.4 -3.8 3.2 -4 q3 0.2 3.2 3.6 q-0.6 2.2 -3.4 2.2 q-2.6 0 -3 -1.8z" fill="#7e7630"/><path d="M751.7 472.2 h2.2 M755.5 472.4 h2 M758.9 472.2 h2" stroke="#4a3216" stroke-width="1" fill="none"/>
<path d="M704.1 512.2 h10.6" stroke="#c49444" stroke-width="1.2" fill="none"/><path d="M703.5 510.6 l0.8 -2.6 l-0.4 -1.8 l1.8 -0.6 l0.2 -2 l1.8 0.2 l1 -2.2 l1.6 1 l1.8 -1.2 l0.8 2 l1.8 -0.2 l-0.2 2.2 l1.6 1 l-0.8 1.8 l0.8 2.2 l-2 1 h-8.6z" fill="#5e5a22"/><path d="M706.3 507.4 q0.4 -3.8 3.2 -4 q3 0.2 3.2 3.6 q-0.6 2.2 -3.4 2.2 q-2.6 0 -3 -1.8z" fill="#7e7630"/><path d="M704.7 511.4 h2.2 M708.5 511.6 h2 M711.9 511.4 h2" stroke="#4a3216" stroke-width="1" fill="none"/>
<path d="M885.5 448.8 h10.6" stroke="#c49444" stroke-width="1.2" fill="none"/><path d="M884.9 447.2 l0.8 -2.6 l-0.4 -1.8 l1.8 -0.6 l0.2 -2 l1.8 0.2 l1 -2.2 l1.6 1 l1.8 -1.2 l0.8 2 l1.8 -0.2 l-0.2 2.2 l1.6 1 l-0.8 1.8 l0.8 2.2 l-2 1 h-8.6z" fill="#5e5a22"/><path d="M887.7 444 q0.4 -3.8 3.2 -4 q3 0.2 3.2 3.6 q-0.6 2.2 -3.4 2.2 q-2.6 0 -3 -1.8z" fill="#7e7630"/><path d="M886.1 448 h2.2 M889.9 448.2 h2 M893.3 448 h2" stroke="#4a3216" stroke-width="1" fill="none"/>
<path d="M956.5 425.3 h10.6" stroke="#c49444" stroke-width="1.2" fill="none"/><path d="M955.9 423.7 l0.8 -2.6 l-0.4 -1.8 l1.8 -0.6 l0.2 -2 l1.8 0.2 l1 -2.2 l1.6 1 l1.8 -1.2 l0.8 2 l1.8 -0.2 l-0.2 2.2 l1.6 1 l-0.8 1.8 l0.8 2.2 l-2 1 h-8.6z" fill="#5e5a22"/><path d="M958.7 420.5 q0.4 -3.8 3.2 -4 q3 0.2 3.2 3.6 q-0.6 2.2 -3.4 2.2 q-2.6 0 -3 -1.8z" fill="#7e7630"/><path d="M957.1 424.5 h2.2 M960.9 424.7 h2 M964.3 424.5 h2" stroke="#4a3216" stroke-width="1" fill="none"/>
<path d="M900.7 495.9 h10.6" stroke="#c49444" stroke-width="1.2" fill="none"/><path d="M900.1 494.3 l0.8 -2.6 l-0.4 -1.8 l1.8 -0.6 l0.2 -2 l1.8 0.2 l1 -2.2 l1.6 1 l1.8 -1.2 l0.8 2 l1.8 -0.2 l-0.2 2.2 l1.6 1 l-0.8 1.8 l0.8 2.2 l-2 1 h-8.6z" fill="#5e5a22"/><path d="M902.9 491.1 q0.4 -3.8 3.2 -4 q3 0.2 3.2 3.6 q-0.6 2.2 -3.4 2.2 q-2.6 0 -3 -1.8z" fill="#7e7630"/><path d="M901.3 495.1 h2.2 M905.1 495.3 h2 M908.5 495.1 h2" stroke="#4a3216" stroke-width="1" fill="none"/>
<path d="M940.8 504.2 h10.6" stroke="#c49444" stroke-width="1.2" fill="none"/><path d="M940.2 502.6 l0.8 -2.6 l-0.4 -1.8 l1.8 -0.6 l0.2 -2 l1.8 0.2 l1 -2.2 l1.6 1 l1.8 -1.2 l0.8 2 l1.8 -0.2 l-0.2 2.2 l1.6 1 l-0.8 1.8 l0.8 2.2 l-2 1 h-8.6z" fill="#5e5a22"/><path d="M943 499.4 q0.4 -3.8 3.2 -4 q3 0.2 3.2 3.6 q-0.6 2.2 -3.4 2.2 q-2.6 0 -3 -1.8z" fill="#7e7630"/><path d="M941.4 503.4 h2.2 M945.2 503.6 h2 M948.6 503.4 h2" stroke="#4a3216" stroke-width="1" fill="none"/>
<path d="M813.8 528.2 h10.6" stroke="#c49444" stroke-width="1.2" fill="none"/><path d="M813.2 526.6 l0.8 -2.6 l-0.4 -1.8 l1.8 -0.6 l0.2 -2 l1.8 0.2 l1 -2.2 l1.6 1 l1.8 -1.2 l0.8 2 l1.8 -0.2 l-0.2 2.2 l1.6 1 l-0.8 1.8 l0.8 2.2 l-2 1 h-8.6z" fill="#5e5a22"/><path d="M816 523.4 q0.4 -3.8 3.2 -4 q3 0.2 3.2 3.6 q-0.6 2.2 -3.4 2.2 q-2.6 0 -3 -1.8z" fill="#7e7630"/><path d="M814.4 527.4 h2.2 M818.2 527.6 h2 M821.6 527.4 h2" stroke="#4a3216" stroke-width="1" fill="none"/>
<path d="M1019.4 465.4 h10.6" stroke="#c49444" stroke-width="1.2" fill="none"/><path d="M1018.8 463.8 l0.8 -2.6 l-0.4 -1.8 l1.8 -0.6 l0.2 -2 l1.8 0.2 l1 -2.2 l1.6 1 l1.8 -1.2 l0.8 2 l1.8 -0.2 l-0.2 2.2 l1.6 1 l-0.8 1.8 l0.8 2.2 l-2 1 h-8.6z" fill="#5e5a22"/><path d="M1021.6 460.6 q0.4 -3.8 3.2 -4 q3 0.2 3.2 3.6 q-0.6 2.2 -3.4 2.2 q-2.6 0 -3 -1.8z" fill="#7e7630"/><path d="M1020 464.6 h2.2 M1023.8 464.8 h2 M1027.2 464.6 h2" stroke="#4a3216" stroke-width="1" fill="none"/>
<path d="M1083 488.2 h10.6" stroke="#c49444" stroke-width="1.2" fill="none"/><path d="M1082.4 486.6 l0.8 -2.6 l-0.4 -1.8 l1.8 -0.6 l0.2 -2 l1.8 0.2 l1 -2.2 l1.6 1 l1.8 -1.2 l0.8 2 l1.8 -0.2 l-0.2 2.2 l1.6 1 l-0.8 1.8 l0.8 2.2 l-2 1 h-8.6z" fill="#5e5a22"/><path d="M1085.2 483.4 q0.4 -3.8 3.2 -4 q3 0.2 3.2 3.6 q-0.6 2.2 -3.4 2.2 q-2.6 0 -3 -1.8z" fill="#7e7630"/><path d="M1083.6 487.4 h2.2 M1087.4 487.6 h2 M1090.8 487.4 h2" stroke="#4a3216" stroke-width="1" fill="none"/>
<path d="M1154 495.9 h10.6" stroke="#c49444" stroke-width="1.2" fill="none"/><path d="M1153.4 494.3 l0.8 -2.6 l-0.4 -1.8 l1.8 -0.6 l0.2 -2 l1.8 0.2 l1 -2.2 l1.6 1 l1.8 -1.2 l0.8 2 l1.8 -0.2 l-0.2 2.2 l1.6 1 l-0.8 1.8 l0.8 2.2 l-2 1 h-8.6z" fill="#5e5a22"/><path d="M1156.2 491.1 q0.4 -3.8 3.2 -4 q3 0.2 3.2 3.6 q-0.6 2.2 -3.4 2.2 q-2.6 0 -3 -1.8z" fill="#7e7630"/><path d="M1154.6 495.1 h2.2 M1158.4 495.3 h2 M1161.8 495.1 h2" stroke="#4a3216" stroke-width="1" fill="none"/>
<path d="M1074.8 559.2 h10.6" stroke="#c49444" stroke-width="1.2" fill="none"/><path d="M1074.2 557.6 l0.8 -2.6 l-0.4 -1.8 l1.8 -0.6 l0.2 -2 l1.8 0.2 l1 -2.2 l1.6 1 l1.8 -1.2 l0.8 2 l1.8 -0.2 l-0.2 2.2 l1.6 1 l-0.8 1.8 l0.8 2.2 l-2 1 h-8.6z" fill="#5e5a22"/><path d="M1077 554.4 q0.4 -3.8 3.2 -4 q3 0.2 3.2 3.6 q-0.6 2.2 -3.4 2.2 q-2.6 0 -3 -1.8z" fill="#7e7630"/><path d="M1075.4 558.4 h2.2 M1079.2 558.6 h2 M1082.6 558.4 h2" stroke="#4a3216" stroke-width="1" fill="none"/>
<path d="M891.1 277.3 h6.6 l1.6 1.4 v6 h-8.2z" fill="#4c1c54"/><path d="M891.4 277.6 h6.2 l1.4 1.2 v3.2 h-7.6z" fill="#745a9e"/><rect x="892.3" y="278.7" width="4.6" height="1" fill="#a28ac2"/><rect x="893.5" y="280.5" width="3.6" height="0.9" fill="#9a82bc"/><rect x="892.7" y="282.7" width="3" height="0.8" fill="#7a5a96"/>
<path d="M835.7 292.7 h6.6 l1.6 1.4 v6 h-8.2z" fill="#4c1c54"/><path d="M836 293 h6.2 l1.4 1.2 v3.2 h-7.6z" fill="#745a9e"/><rect x="836.9" y="294.1" width="4.6" height="1" fill="#a28ac2"/><rect x="838.1" y="295.9" width="3.6" height="0.9" fill="#9a82bc"/><rect x="837.3" y="298.1" width="3" height="0.8" fill="#7a5a96"/>
<path d="M756.7 332.3 h6.6 l1.6 1.4 v6 h-8.2z" fill="#4c1c54"/><path d="M757 332.6 h6.2 l1.4 1.2 v3.2 h-7.6z" fill="#745a9e"/><rect x="757.9" y="333.7" width="4.6" height="1" fill="#a28ac2"/><rect x="759.1" y="335.5" width="3.6" height="0.9" fill="#9a82bc"/><rect x="758.3" y="337.7" width="3" height="0.8" fill="#7a5a96"/>
<path d="M756.7 371.4 h6.6 l1.6 1.4 v6 h-8.2z" fill="#4c1c54"/><path d="M757 371.7 h6.2 l1.4 1.2 v3.2 h-7.6z" fill="#745a9e"/><rect x="757.9" y="372.8" width="4.6" height="1" fill="#a28ac2"/><rect x="759.1" y="374.6" width="3.6" height="0.9" fill="#9a82bc"/><rect x="758.3" y="376.8" width="3" height="0.8" fill="#7a5a96"/>
<path d="M898.8 363.7 h6.6 l1.6 1.4 v6 h-8.2z" fill="#4c1c54"/><path d="M899.1 364 h6.2 l1.4 1.2 v3.2 h-7.6z" fill="#745a9e"/><rect x="900" y="365.1" width="4.6" height="1" fill="#a28ac2"/><rect x="901.2" y="366.9" width="3.6" height="0.9" fill="#9a82bc"/><rect x="900.4" y="369.1" width="3" height="0.8" fill="#7a5a96"/>
<path d="M779.8 395.1 h6.6 l1.6 1.4 v6 h-8.2z" fill="#4c1c54"/><path d="M780.1 395.4 h6.2 l1.4 1.2 v3.2 h-7.6z" fill="#745a9e"/><rect x="781" y="396.5" width="4.6" height="1" fill="#a28ac2"/><rect x="782.2" y="398.3" width="3.6" height="0.9" fill="#9a82bc"/><rect x="781.4" y="400.5" width="3" height="0.8" fill="#7a5a96"/>
<path d="M985.7 277.3 h6.6 l1.6 1.4 v6 h-8.2z" fill="#4c1c54"/><path d="M986 277.6 h6.2 l1.4 1.2 v3.2 h-7.6z" fill="#745a9e"/><rect x="986.9" y="278.7" width="4.6" height="1" fill="#a28ac2"/><rect x="988.1" y="280.5" width="3.6" height="0.9" fill="#9a82bc"/><rect x="987.3" y="282.7" width="3" height="0.8" fill="#7a5a96"/>
<path d="M953.8 308.4 h6.6 l1.6 1.4 v6 h-8.2z" fill="#4c1c54"/><path d="M954.1 308.7 h6.2 l1.4 1.2 v3.2 h-7.6z" fill="#745a9e"/><rect x="955" y="309.8" width="4.6" height="1" fill="#a28ac2"/><rect x="956.2" y="311.6" width="3.6" height="0.9" fill="#9a82bc"/><rect x="955.4" y="313.8" width="3" height="0.8" fill="#7a5a96"/>
<path d="M1087.7 308.4 h6.6 l1.6 1.4 v6 h-8.2z" fill="#4c1c54"/><path d="M1088 308.7 h6.2 l1.4 1.2 v3.2 h-7.6z" fill="#745a9e"/><rect x="1088.9" y="309.8" width="4.6" height="1" fill="#a28ac2"/><rect x="1090.1" y="311.6" width="3.6" height="0.9" fill="#9a82bc"/><rect x="1089.3" y="313.8" width="3" height="0.8" fill="#7a5a96"/>
<path d="M1072.1 348.1 h6.6 l1.6 1.4 v6 h-8.2z" fill="#4c1c54"/><path d="M1072.4 348.4 h6.2 l1.4 1.2 v3.2 h-7.6z" fill="#745a9e"/><rect x="1073.3" y="349.5" width="4.6" height="1" fill="#a28ac2"/><rect x="1074.5" y="351.3" width="3.6" height="0.9" fill="#9a82bc"/><rect x="1073.7" y="353.5" width="3" height="0.8" fill="#7a5a96"/>
<path d="M945.8 363.7 h6.6 l1.6 1.4 v6 h-8.2z" fill="#4c1c54"/><path d="M946.1 364 h6.2 l1.4 1.2 v3.2 h-7.6z" fill="#745a9e"/><rect x="947" y="365.1" width="4.6" height="1" fill="#a28ac2"/><rect x="948.2" y="366.9" width="3.6" height="0.9" fill="#9a82bc"/><rect x="947.4" y="369.1" width="3" height="0.8" fill="#7a5a96"/>
<path d="M1008.9 395.6 h6.6 l1.6 1.4 v6 h-8.2z" fill="#4c1c54"/><path d="M1009.2 395.9 h6.2 l1.4 1.2 v3.2 h-7.6z" fill="#745a9e"/><rect x="1010.1" y="397" width="4.6" height="1" fill="#a28ac2"/><rect x="1011.3" y="398.8" width="3.6" height="0.9" fill="#9a82bc"/><rect x="1010.5" y="401" width="3" height="0.8" fill="#7a5a96"/>
<path d="M732.9 411.1 h6.6 l1.6 1.4 v6 h-8.2z" fill="#4c1c54"/><path d="M733.2 411.4 h6.2 l1.4 1.2 v3.2 h-7.6z" fill="#745a9e"/><rect x="734.1" y="412.5" width="4.6" height="1" fill="#a28ac2"/><rect x="735.3" y="414.3" width="3.6" height="0.9" fill="#9a82bc"/><rect x="734.5" y="416.5" width="3" height="0.8" fill="#7a5a96"/>
<path d="M708.9 466.5 h6.6 l1.6 1.4 v6 h-8.2z" fill="#4c1c54"/><path d="M709.2 466.8 h6.2 l1.4 1.2 v3.2 h-7.6z" fill="#745a9e"/><rect x="710.1" y="467.9" width="4.6" height="1" fill="#a28ac2"/><rect x="711.3" y="469.7" width="3.6" height="0.9" fill="#9a82bc"/><rect x="710.5" y="471.9" width="3" height="0.8" fill="#7a5a96"/>
<path d="M693.4 521.8 h6.6 l1.6 1.4 v6 h-8.2z" fill="#4c1c54"/><path d="M693.7 522.1 h6.2 l1.4 1.2 v3.2 h-7.6z" fill="#745a9e"/><rect x="694.6" y="523.2" width="4.6" height="1" fill="#a28ac2"/><rect x="695.8" y="525" width="3.6" height="0.9" fill="#9a82bc"/><rect x="695" y="527.2" width="3" height="0.8" fill="#7a5a96"/>
<path d="M748.8 521.8 h6.6 l1.6 1.4 v6 h-8.2z" fill="#4c1c54"/><path d="M749.1 522.1 h6.2 l1.4 1.2 v3.2 h-7.6z" fill="#745a9e"/><rect x="750" y="523.2" width="4.6" height="1" fill="#a28ac2"/><rect x="751.2" y="525" width="3.6" height="0.9" fill="#9a82bc"/><rect x="750.4" y="527.2" width="3" height="0.8" fill="#7a5a96"/>
<path d="M890.7 403.6 h6.6 l1.6 1.4 v6 h-8.2z" fill="#4c1c54"/><path d="M891 403.9 h6.2 l1.4 1.2 v3.2 h-7.6z" fill="#745a9e"/><rect x="891.9" y="405" width="4.6" height="1" fill="#a28ac2"/><rect x="893.1" y="406.8" width="3.6" height="0.9" fill="#9a82bc"/><rect x="892.3" y="409" width="3" height="0.8" fill="#7a5a96"/>
<path d="M953.7 443 h6.6 l1.6 1.4 v6 h-8.2z" fill="#4c1c54"/><path d="M954 443.3 h6.2 l1.4 1.2 v3.2 h-7.6z" fill="#745a9e"/><rect x="954.9" y="444.4" width="4.6" height="1" fill="#a28ac2"/><rect x="956.1" y="446.2" width="3.6" height="0.9" fill="#9a82bc"/><rect x="955.3" y="448.4" width="3" height="0.8" fill="#7a5a96"/>
<path d="M882.8 482.4 h6.6 l1.6 1.4 v6 h-8.2z" fill="#4c1c54"/><path d="M883.1 482.7 h6.2 l1.4 1.2 v3.2 h-7.6z" fill="#745a9e"/><rect x="884" y="483.8" width="4.6" height="1" fill="#a28ac2"/><rect x="885.2" y="485.6" width="3.6" height="0.9" fill="#9a82bc"/><rect x="884.4" y="487.8" width="3" height="0.8" fill="#7a5a96"/>
<path d="M922.1 498.3 h6.6 l1.6 1.4 v6 h-8.2z" fill="#4c1c54"/><path d="M922.4 498.6 h6.2 l1.4 1.2 v3.2 h-7.6z" fill="#745a9e"/><rect x="923.3" y="499.7" width="4.6" height="1" fill="#a28ac2"/><rect x="924.5" y="501.5" width="3.6" height="0.9" fill="#9a82bc"/><rect x="923.7" y="503.7" width="3" height="0.8" fill="#7a5a96"/>
<path d="M835.8 506.2 h6.6 l1.6 1.4 v6 h-8.2z" fill="#4c1c54"/><path d="M836.1 506.5 h6.2 l1.4 1.2 v3.2 h-7.6z" fill="#745a9e"/><rect x="837" y="507.6" width="4.6" height="1" fill="#a28ac2"/><rect x="838.2" y="509.4" width="3.6" height="0.9" fill="#9a82bc"/><rect x="837.4" y="511.6" width="3" height="0.8" fill="#7a5a96"/>
<path d="M1095.8 458.5 h6.6 l1.6 1.4 v6 h-8.2z" fill="#4c1c54"/><path d="M1096.1 458.8 h6.2 l1.4 1.2 v3.2 h-7.6z" fill="#745a9e"/><rect x="1097" y="459.9" width="4.6" height="1" fill="#a28ac2"/><rect x="1098.2" y="461.7" width="3.6" height="0.9" fill="#9a82bc"/><rect x="1097.4" y="463.9" width="3" height="0.8" fill="#7a5a96"/>
<path d="M1127.9 506.3 h6.6 l1.6 1.4 v6 h-8.2z" fill="#4c1c54"/><path d="M1128.2 506.6 h6.2 l1.4 1.2 v3.2 h-7.6z" fill="#745a9e"/><rect x="1129.1" y="507.7" width="4.6" height="1" fill="#a28ac2"/><rect x="1130.3" y="509.5" width="3.6" height="0.9" fill="#9a82bc"/><rect x="1129.5" y="511.7" width="3" height="0.8" fill="#7a5a96"/>
<path d="M1064.8 514.2 h6.6 l1.6 1.4 v6 h-8.2z" fill="#4c1c54"/><path d="M1065.1 514.5 h6.2 l1.4 1.2 v3.2 h-7.6z" fill="#745a9e"/><rect x="1066" y="515.6" width="4.6" height="1" fill="#a28ac2"/><rect x="1067.2" y="517.4" width="3.6" height="0.9" fill="#9a82bc"/><rect x="1066.4" y="519.6" width="3" height="0.8" fill="#7a5a96"/>
<path d="M819.8 537.2 h6.6 l1.6 1.4 v6 h-8.2z" fill="#4c1c54"/><path d="M820.1 537.5 h6.2 l1.4 1.2 v3.2 h-7.6z" fill="#745a9e"/><rect x="821" y="538.6" width="4.6" height="1" fill="#a28ac2"/><rect x="822.2" y="540.4" width="3.6" height="0.9" fill="#9a82bc"/><rect x="821.4" y="542.6" width="3" height="0.8" fill="#7a5a96"/>
<path d="M929.7 537.2 h6.6 l1.6 1.4 v6 h-8.2z" fill="#4c1c54"/><path d="M930 537.5 h6.2 l1.4 1.2 v3.2 h-7.6z" fill="#745a9e"/><rect x="930.9" y="538.6" width="4.6" height="1" fill="#a28ac2"/><rect x="932.1" y="540.4" width="3.6" height="0.9" fill="#9a82bc"/><rect x="931.3" y="542.6" width="3" height="0.8" fill="#7a5a96"/>
<path d="M993.1 553.1 h6.6 l1.6 1.4 v6 h-8.2z" fill="#4c1c54"/><path d="M993.4 553.4 h6.2 l1.4 1.2 v3.2 h-7.6z" fill="#745a9e"/><rect x="994.3" y="554.5" width="4.6" height="1" fill="#a28ac2"/><rect x="995.5" y="556.3" width="3.6" height="0.9" fill="#9a82bc"/><rect x="994.7" y="558.5" width="3" height="0.8" fill="#7a5a96"/>
<rect x="877.8" y="285.8" width="2" height="2.2" fill="#6e2274"/><rect x="879.2" y="287.8" width="1.6" height="1.3" fill="#6e6a2a"/>
<rect x="917" y="294.3" width="2" height="2.2" fill="#6e2274"/><rect x="918.4" y="296.3" width="1.6" height="1.3" fill="#6e6a2a"/>
<rect x="861.7" y="302.2" width="2" height="2.2" fill="#6e2274"/><rect x="863.1" y="304.2" width="1.6" height="1.3" fill="#6e6a2a"/>
<rect x="735.6" y="333.9" width="2" height="2.2" fill="#6e2274"/><rect x="737" y="335.9" width="1.6" height="1.3" fill="#6e6a2a"/>
<rect x="798.9" y="333.9" width="2" height="2.2" fill="#6e2274"/><rect x="800.3" y="335.9" width="1.6" height="1.3" fill="#6e6a2a"/>
<rect x="774.6" y="349.3" width="2" height="2.2" fill="#6e2274"/><rect x="776" y="351.3" width="1.6" height="1.3" fill="#6e6a2a"/>
<rect x="751.4" y="357.2" width="2" height="2.2" fill="#6e2274"/><rect x="752.8" y="359.2" width="1.6" height="1.3" fill="#6e6a2a"/>
<rect x="798.9" y="365.3" width="2" height="2.2" fill="#6e2274"/><rect x="800.3" y="367.3" width="1.6" height="1.3" fill="#6e6a2a"/>
<rect x="846.4" y="341.2" width="2" height="2.2" fill="#6e2274"/><rect x="847.8" y="343.2" width="1.6" height="1.3" fill="#6e6a2a"/>
<rect x="853.6" y="365.2" width="2" height="2.2" fill="#6e2274"/><rect x="855" y="367.2" width="1.6" height="1.3" fill="#6e6a2a"/>
<rect x="917" y="373" width="2" height="2.2" fill="#6e2274"/><rect x="918.4" y="375" width="1.6" height="1.3" fill="#6e6a2a"/>
<rect x="735.6" y="388.9" width="2" height="2.2" fill="#6e2274"/><rect x="737" y="390.9" width="1.6" height="1.3" fill="#6e6a2a"/>
<rect x="861.7" y="388.9" width="2" height="2.2" fill="#6e2274"/><rect x="863.1" y="390.9" width="1.6" height="1.3" fill="#6e6a2a"/>
<rect x="893.4" y="388.9" width="2" height="2.2" fill="#6e2274"/><rect x="894.8" y="390.9" width="1.6" height="1.3" fill="#6e6a2a"/>
<rect x="813.7" y="396.7" width="2" height="2.2" fill="#6e2274"/><rect x="815.1" y="398.7" width="1.6" height="1.3" fill="#6e6a2a"/>
<rect x="1122.8" y="262" width="2" height="2.2" fill="#6e2274"/><rect x="1124.2" y="264" width="1.6" height="1.3" fill="#6e6a2a"/>
<rect x="1067.4" y="278.1" width="2" height="2.2" fill="#6e2274"/><rect x="1068.8" y="280.1" width="1.6" height="1.3" fill="#6e6a2a"/>
<rect x="1099" y="278.1" width="2" height="2.2" fill="#6e2274"/><rect x="1100.4" y="280.1" width="1.6" height="1.3" fill="#6e6a2a"/>
<rect x="1169.8" y="302" width="2" height="2.2" fill="#6e2274"/><rect x="1171.2" y="304" width="1.6" height="1.3" fill="#6e6a2a"/>
<rect x="1067.4" y="325.9" width="2" height="2.2" fill="#6e2274"/><rect x="1068.8" y="327.9" width="1.6" height="1.3" fill="#6e6a2a"/>
<rect x="1090.8" y="341.5" width="2" height="2.2" fill="#6e2274"/><rect x="1092.2" y="343.5" width="1.6" height="1.3" fill="#6e6a2a"/>
<rect x="956.7" y="349.2" width="2" height="2.2" fill="#6e2274"/><rect x="958.1" y="351.2" width="1.6" height="1.3" fill="#6e6a2a"/>
<rect x="1035.4" y="349.2" width="2" height="2.2" fill="#6e2274"/><rect x="1036.8" y="351.2" width="1.6" height="1.3" fill="#6e6a2a"/>
<rect x="1083" y="381" width="2" height="2.2" fill="#6e2274"/><rect x="1084.4" y="383" width="1.6" height="1.3" fill="#6e6a2a"/>
<rect x="1146.1" y="381" width="2" height="2.2" fill="#6e2274"/><rect x="1147.5" y="383" width="1.6" height="1.3" fill="#6e6a2a"/>
<rect x="703.8" y="459.8" width="2" height="2.2" fill="#6e2274"/><rect x="705.2" y="461.8" width="1.6" height="1.3" fill="#6e6a2a"/>
<rect x="774.8" y="468.1" width="2" height="2.2" fill="#6e2274"/><rect x="776.2" y="470.1" width="1.6" height="1.3" fill="#6e6a2a"/>
<rect x="720.1" y="483.6" width="2" height="2.2" fill="#6e2274"/><rect x="721.5" y="485.6" width="1.6" height="1.3" fill="#6e6a2a"/>
<rect x="988" y="404.4" width="2" height="2.2" fill="#6e2274"/><rect x="989.4" y="406.4" width="1.6" height="1.3" fill="#6e6a2a"/>
<rect x="932.4" y="420.1" width="2" height="2.2" fill="#6e2274"/><rect x="933.8" y="422.1" width="1.6" height="1.3" fill="#6e6a2a"/>
<rect x="893.2" y="428" width="2" height="2.2" fill="#6e2274"/><rect x="894.6" y="430" width="1.6" height="1.3" fill="#6e6a2a"/>
<rect x="980.4" y="435.8" width="2" height="2.2" fill="#6e2274"/><rect x="981.8" y="437.8" width="1.6" height="1.3" fill="#6e6a2a"/>
<rect x="940.7" y="443.9" width="2" height="2.2" fill="#6e2274"/><rect x="942.1" y="445.9" width="1.6" height="1.3" fill="#6e6a2a"/>
<rect x="924.6" y="475.7" width="2" height="2.2" fill="#6e2274"/><rect x="926" y="477.7" width="1.6" height="1.3" fill="#6e6a2a"/>
<rect x="956.2" y="483.7" width="2" height="2.2" fill="#6e2274"/><rect x="957.6" y="485.7" width="1.6" height="1.3" fill="#6e6a2a"/>
<rect x="838.3" y="491.2" width="2" height="2.2" fill="#6e2274"/><rect x="839.7" y="493.2" width="1.6" height="1.3" fill="#6e6a2a"/>
<rect x="885.3" y="499" width="2" height="2.2" fill="#6e2274"/><rect x="886.7" y="501" width="1.6" height="1.3" fill="#6e6a2a"/>
<rect x="948.6" y="522.6" width="2" height="2.2" fill="#6e2274"/><rect x="950" y="524.6" width="1.6" height="1.3" fill="#6e6a2a"/>
<rect x="1051" y="420.1" width="2" height="2.2" fill="#6e2274"/><rect x="1052.4" y="422.1" width="1.6" height="1.3" fill="#6e6a2a"/>
<rect x="1090.9" y="420.1" width="2" height="2.2" fill="#6e2274"/><rect x="1092.3" y="422.1" width="1.6" height="1.3" fill="#6e6a2a"/>
<rect x="1043.1" y="468.1" width="2" height="2.2" fill="#6e2274"/><rect x="1044.5" y="470.1" width="1.6" height="1.3" fill="#6e6a2a"/>
<rect x="1114.4" y="460.1" width="2" height="2.2" fill="#6e2274"/><rect x="1115.8" y="462.1" width="1.6" height="1.3" fill="#6e6a2a"/>
<rect x="1106.8" y="483.7" width="2" height="2.2" fill="#6e2274"/><rect x="1108.2" y="485.7" width="1.6" height="1.3" fill="#6e6a2a"/>
<rect x="1177.9" y="475.7" width="2" height="2.2" fill="#6e2274"/><rect x="1179.3" y="477.7" width="1.6" height="1.3" fill="#6e6a2a"/>
<rect x="1003.7" y="515.2" width="2" height="2.2" fill="#6e2274"/><rect x="1005.1" y="517.2" width="1.6" height="1.3" fill="#6e6a2a"/>
<rect x="1051" y="522.8" width="2" height="2.2" fill="#6e2274"/><rect x="1052.4" y="524.8" width="1.6" height="1.3" fill="#6e6a2a"/>
<rect x="1153.7" y="515.2" width="2" height="2.2" fill="#6e2274"/><rect x="1155.1" y="517.2" width="1.6" height="1.3" fill="#6e6a2a"/>
<rect x="838.3" y="530.8" width="2" height="2.2" fill="#6e2274"/><rect x="839.7" y="532.8" width="1.6" height="1.3" fill="#6e6a2a"/>
<rect x="963.8" y="546.7" width="2" height="2.2" fill="#6e2274"/><rect x="965.2" y="548.7" width="1.6" height="1.3" fill="#6e6a2a"/>
<rect x="1066.9" y="538.8" width="2" height="2.2" fill="#6e2274"/><rect x="1068.3" y="540.8" width="1.6" height="1.3" fill="#6e6a2a"/>
<rect x="711.8" y="530.8" width="2" height="2.2" fill="#6e2274"/><rect x="713.2" y="532.8" width="1.6" height="1.3" fill="#6e6a2a"/>
<rect x="759" y="239.3" width="2" height="2.2" fill="#6e2274"/><rect x="760.4" y="241.3" width="1.6" height="1.3" fill="#6e6a2a"/>
<rect x="735.2" y="247.1" width="2" height="2.2" fill="#6e2274"/><rect x="736.6" y="249.1" width="1.6" height="1.3" fill="#6e6a2a"/>
<rect x="743" y="247.1" width="2" height="2.2" fill="#6e2274"/><rect x="744.4" y="249.1" width="1.6" height="1.3" fill="#6e6a2a"/>
<rect x="750.8" y="247.1" width="2" height="2.2" fill="#6e2274"/><rect x="752.2" y="249.1" width="1.6" height="1.3" fill="#6e6a2a"/>
<rect x="782.7" y="247.1" width="2" height="2.2" fill="#6e2274"/><rect x="784.1" y="249.1" width="1.6" height="1.3" fill="#6e6a2a"/>
<rect x="759" y="254.8" width="2" height="2.2" fill="#6e2274"/><rect x="760.4" y="256.8" width="1.6" height="1.3" fill="#6e6a2a"/>
<rect x="766.7" y="254.8" width="2" height="2.2" fill="#6e2274"/><rect x="768.1" y="256.8" width="1.6" height="1.3" fill="#6e6a2a"/>
<rect x="774.5" y="254.8" width="2" height="2.2" fill="#6e2274"/><rect x="775.9" y="256.8" width="1.6" height="1.3" fill="#6e6a2a"/>
<use href="#tree" x="836" y="213.5"/>
<use href="#tree" x="1009.5" y="213.5"/>
<use href="#tree" x="915" y="221"/>
<use href="#tree" x="1025" y="283.5"/>
<use href="#tree" x="859.5" y="316"/>
<use href="#tree" x="694" y="339.5"/>
<use href="#tree" x="1096.5" y="355.5"/>
<use href="#tree" x="844.5" y="394"/>
<use href="#tree" x="986" y="410.5"/>
<use href="#tree" x="1120.5" y="434.5"/>
<use href="#tree" x="788.5" y="450"/>
<use href="#tree" x="662" y="466"/>
<use href="#tree" x="954.5" y="482"/>
<use href="#tree" x="876" y="505.5"/>
<rect x="786.5" y="425.5" width="160" height="78.5" fill="none" stroke="#e6dcc8" stroke-opacity="0.85" stroke-width="1.3"/>
</svg>

<!-- ===== scene overlay tool palette ===== -->
<div class="abs" style="left:346px;top:97px;width:54px;height:179px;background:#1f150c;border-radius:4px"></div>
<div class="abs" style="left:363px;top:104.6px;width:20px;height:1px;background:#6a6a6a"></div>
<div class="abs" style="left:363px;top:108.8px;width:20px;height:1.2px;background:#6a6a6a"></div>
<div class="abs" style="left:350px;top:117px;width:46px;height:25px;background:#585858;border-radius:3px 3px 0 0"></div>
<div class="abs" style="left:350px;top:143px;width:46px;height:25px;background:#585858"></div>
<div class="abs" style="left:350px;top:169px;width:46px;height:25px;background:#585858"></div>
<div class="abs" style="left:350px;top:195px;width:46px;height:25px;background:#585858"></div>
<div class="abs" style="left:350px;top:221px;width:46px;height:25px;background:#46607c"></div>
<div class="abs" style="left:350px;top:247px;width:46px;height:25px;background:#585858;border-radius:0 0 3px 3px"></div>
<!-- hand -->
<svg style="left:363px;top:119px" width="20" height="21" viewBox="0 0 20 21"><path d="M5.6 19.6 L2.2 10.8 C1.4 9 0.4 7.6 0.9 7.2 C1.8 6.6 3.4 8.2 5 10.6 L4.6 3.4 C4.6 2 6.4 2 6.6 3.4 L7.6 9.4 L8.2 1.8 C8.3 0.4 10.2 0.4 10.3 1.8 L10.6 9.3 L12 2.6 C12.3 1.3 14.1 1.6 13.9 3 L13.3 9.8 L15.6 5.6 C16.3 4.4 17.9 5.2 17.4 6.5 L14.2 15 L13 19.6Z" fill="#c6c6c6"/></svg>
<!-- move -->
<svg style="left:363px;top:146px" width="20" height="20" viewBox="0 0 20 20"><g fill="none" stroke="#c6c6c6" stroke-width="1.2" stroke-linecap="round" stroke-linejoin="round"><path d="M10 1 V7.6 M10 12.4 V19 M1 10 H7.6 M12.4 10 H19"/><path d="M7.4 3.6 L10 1 L12.6 3.6 M7.4 16.4 L10 19 L12.6 16.4 M3.6 7.4 L1 10 L3.6 12.6 M16.4 7.4 L19 10 L16.4 12.6"/></g><rect x="9" y="9" width="2" height="2" fill="#8a8a8a"/></svg>
<!-- rotate -->
<svg style="left:363px;top:172px" width="20" height="20" viewBox="0 0 20 20"><g fill="none" stroke="#c6c6c6" stroke-width="1.2" stroke-linecap="round" stroke-linejoin="round"><path d="M8.2 1.8 C3.4 3 0.8 7.8 2.2 12.4 C2.8 14.6 4 16.4 5.6 17.4"/><path d="M1.8 17.8 H6 V13.6"/><path d="M11.8 18.2 C16.6 17 19.2 12.2 17.8 7.6 C17.2 5.4 16 3.6 14.4 2.6"/><path d="M18.2 2.2 H14 V6.4"/></g></svg>
<!-- scale -->
<svg style="left:363px;top:198px" width="20" height="20" viewBox="0 0 20 20"><g fill="none" stroke="#c6c6c6" stroke-width="1.1" stroke-linejoin="round"><rect x="1.2" y="1.2" width="17.6" height="17.6" rx="2"/><rect x="1.2" y="13" width="5.8" height="5.8"/><path d="M9 11 L15 5 M10.4 4.8 H15.2 V9.6" stroke-linecap="round"/></g></svg>
<!-- rect (active) -->
<svg style="left:363px;top:224px" width="20" height="20" viewBox="0 0 20 20"><g fill="#ffffff"><rect x="1" y="1" width="4.4" height="4.4"/><rect x="14.6" y="1" width="4.4" height="4.4"/><rect x="1" y="14.6" width="4.4" height="4.4"/><rect x="14.6" y="14.6" width="4.4" height="4.4"/><rect x="6.4" y="2.2" width="7.2" height="1.9"/><rect x="6.4" y="16.4" width="7.2" height="1"/><rect x="2.7" y="6.4" width="1" height="7.2"/><rect x="15.8" y="6.4" width="1.9" height="7.2"/></g></svg>
<!-- transform -->
<svg style="left:362px;top:249px" width="22" height="22" viewBox="0 0 22 22"><g fill="none" stroke="#c6c6c6" stroke-width="1.1"><path d="M13.4 3.2 A8.3 8.3 0 0 1 19 8.6 M19 13.8 A8.3 8.3 0 0 1 13.6 19.1 M8.4 19.1 A8.3 8.3 0 0 1 3 13.8 M3 8.6 A8.3 8.3 0 0 1 8.4 3.2"/></g><g fill="#a8a8a8"><path d="M11 4.6 L13.3 7.6 H8.7Z M11 17.8 L13.3 14.8 H8.7Z M4.4 11.2 L7.4 8.9 V13.5Z M17.6 11.2 L14.6 8.9 V13.5Z"/><rect x="10.3" y="7" width="1.4" height="8.4"/><rect x="6.8" y="10.5" width="8.4" height="1.4"/></g><path d="M17 0.8 H20.8 V4.6Z M1 17.6 V21.4 H4.8Z" fill="#e0e0e0"/></svg>

<!-- ===== bottom: project / console ===== -->
<div class="abs" style="left:0px;top:641px;width:1177px;height:24px;background:#282828;border-radius:3px 3px 0 0"></div>
<div class="abs" style="left:0px;top:641px;width:102px;height:24px;background:#3c3c3c;border-radius:3px 3px 0 0"></div>
<svg style="left:9px;top:648px" width="14" height="12" viewBox="0 0 14 12"><path d="M0.3 0.8 Q0.3 0.3 0.8 0.3 H5 L6.6 2.2 H13.2 Q13.7 2.2 13.7 2.7 V11.2 Q13.7 11.7 13.2 11.7 H0.8 Q0.3 11.7 0.3 11.2Z" fill="#c2c2c2"/></svg>
<div class="t" style="left:28.4px;top:644px;font-size:15px;letter-spacing:0.57px;">Project</div>
<svg style="left:114px;top:647px" width="12" height="13" viewBox="0 0 12 13"><rect x="0" y="0" width="12" height="13" rx="1" fill="#c4c4c4"/><rect x="1.2" y="1.2" width="9.6" height="10.6" fill="#282828"/><path d="M2.2 3.4 H9.8 M2.2 6.5 H9.8 M2.2 9.6 H9.8" stroke="#c4c4c4" stroke-width="1.7"/></svg>
<div class="t" style="left:132.5px;top:644px;font-size:15px;letter-spacing:0.35px;">Console</div>
<svg style="left:1133px;top:646px" width="12" height="12" viewBox="0 0 12 12"><path d="M2.5 5 V3.2 C2.5 1.6 3.6 0.8 4.9 0.8 H7.4 C8.8 0.8 9.6 1.8 9.6 3" fill="none" stroke="#c4c4c4" stroke-width="1.2"/><rect x="1.1" y="5.6" width="8.8" height="5" fill="none" stroke="#c4c4c4" stroke-width="1.2"/></svg>
<svg style="left:1158px;top:646px" width="4" height="12" viewBox="0 0 4 12"><circle cx="2" cy="1.6" r="1.4" fill="#c4c4c4"/><circle cx="2" cy="6" r="1.4" fill="#c4c4c4"/><circle cx="2" cy="10.4" r="1.4" fill="#c4c4c4"/></svg>
<div class="abs" style="left:0px;top:665px;width:1177px;height:25px;background:#3c3c3c;"></div>
<div class="abs" style="left:0px;top:690px;width:1177px;height:1px;background:#232323;"></div>
<svg style="left:8px;top:670px" width="16" height="16" viewBox="0 0 16 16"><path d="M8 0.5 V15.5 M0.5 8 H15.5" stroke="#d2d2d2" stroke-width="1.6" fill="none"/></svg>
<svg style="left:29px;top:675px" width="10" height="6" viewBox="0 0 10 6"><path d="M0.3 0.3 H9.7 L5.0 5.7Z" fill="#c4c4c4"/></svg>
<div class="abs" style="left:636px;top:668px;width:396px;height:20px;background:#2a2a2a;border:1px solid #212121;border-radius:3px;box-sizing:border-box"></div>
<svg style="left:641px;top:673px" width="10" height="11" viewBox="0 0 10 11"><circle cx="3.6" cy="3.8" r="2.6" fill="none" stroke="#b4b4b4" stroke-width="1.4"/><path d="M5.5 5.8 L9 9.8" stroke="#b4b4b4" stroke-width="1.6"/></svg>
<div class="abs" style="left:1011px;top:669px;width:20px;height:18px;background:#3a3a3a;border-radius:0 3px 3px 0"></div>
<svg style="left:1014px;top:671px" width="14" height="14" viewBox="0 0 14 14"><path d="M3.5 5.5 V1.8 C3.5 1.2 3.9 0.8 4.5 0.8 H12.2 C12.8 0.8 13.2 1.2 13.2 1.8 V9.5 C13.2 10.1 12.8 10.5 12.2 10.5 H8.5" fill="none" stroke="#b0b0b0" stroke-width="1"/><rect x="0.8" y="8" width="5" height="5" fill="none" stroke="#b0b0b0" stroke-width="1"/><path d="M4.5 9.5 L10.8 3.2 M7 3 H11 V7" fill="none" stroke="#b0b0b0" stroke-width="1.2"/></svg>
<div class="abs" style="left:1035px;top:665px;width:1px;height:25px;background:#2c2c2c;"></div>
<div class="abs" style="left:1067px;top:665px;width:1px;height:25px;background:#2c2c2c;"></div>
<div class="abs" style="left:1100px;top:665px;width:1px;height:25px;background:#2c2c2c;"></div>
<div class="abs" style="left:1134px;top:665px;width:1px;height:25px;background:#2c2c2c;"></div>
<div class="abs" style="left:1135px;top:665px;width:42px;height:25px;background:#505050;"></div>
<svg style="left:1043px;top:669px" width="16" height="17" viewBox="0 0 16 17"><rect x="1.4" y="0.6" width="6.6" height="6.6" fill="#c4c4c4"/><circle cx="4.8" cy="12.4" r="4.2" fill="#c4c4c4"/><path d="M11.4 2 L15.4 10 H8.6Z" fill="#c4c4c4" stroke="#3c3c3c" stroke-width="0.8"/></svg>
<svg style="left:1076px;top:671px" width="15" height="14" viewBox="0 0 15 14"><path d="M7.8 0.8 H13.6 Q14.2 0.8 14.2 1.4 V6.6 L7 13.4 L0.8 7.6Z" fill="#c4c4c4"/><circle cx="11.4" cy="3.6" r="1.2" fill="#3c3c3c"/></svg>
<svg style="left:1109px;top:670px" width="16" height="15" viewBox="0 0 16 15"><path d="M8 0.4 L10.2 5.4 L15.6 5.9 L11.5 9.5 L12.8 14.8 L8 12 L3.2 14.8 L4.5 9.5 L0.4 5.9 L5.8 5.4Z" fill="#8e8e8e"/></svg>
<svg style="left:1141px;top:670px" width="19" height="16" viewBox="0 0 19 16"><path d="M1 8.2 C4 3.4 14 3.2 18 8.2 C14 13.2 4.4 13 1 8.2Z" fill="none" stroke="#d6d6d6" stroke-width="1.3"/><path d="M6 7.6 C6.8 5.2 12 4.8 12.8 8" fill="none" stroke="#d6d6d6" stroke-width="1.2"/><path d="M3 14.6 L15.6 1" stroke="#d6d6d6" stroke-width="1.6"/></svg>
<div class="t" style="left:1161.5px;top:668px;font-size:15px;color:#d6d6d6;letter-spacing:-0.34px;">5</div>
<div class="abs" style="left:0px;top:691px;width:283px;height:248px;background:#383838;"></div>
<div class="abs" style="left:283px;top:691px;width:16px;height:248px;background:#353535;"></div>
<div class="abs" style="left:298.5px;top:691px;width:1.6px;height:248px;background:#232323;"></div>
<div class="abs" style="left:0px;top:754px;width:283px;height:20px;background:#4d4d4d;"></div>
<svg style="left:286px;top:698px" width="10" height="6" viewBox="0 0 10 6"><path d="M5 0.3 L9.7 5.7 H0.3Z" fill="#c4c4c4"/></svg>
<svg style="left:286px;top:927px" width="10" height="6" viewBox="0 0 10 6"><path d="M0.3 0.3 H9.7 L5 5.7Z" fill="#c4c4c4"/></svg>
<div class="abs" style="left:286px;top:760px;width:11px;height:68px;background:#5f5f5f;border-radius:6px"></div>
<svg style="left:75px;top:698px" width="14" height="12" viewBox="0 0 14 12"><path d="M0.3 0.8 Q0.3 0.3 0.8 0.3 H5 L6.6 2.2 H13.2 Q13.7 2.2 13.7 2.7 V11.2 Q13.7 11.7 13.2 11.7 H0.8 Q0.3 11.7 0.3 11.2Z" fill="#c2c2c2"/></svg>
<div class="t" style="left:94.5px;top:694px;font-size:15px;letter-spacing:0.28px;">tronco1</div>
<svg style="left:75px;top:718px" width="14" height="12" viewBox="0 0 14 12"><path d="M0.3 0.8 Q0.3 0.3 0.8 0.3 H5 L6.6 2.2 H13.2 Q13.7 2.2 13.7 2.7 V11.2 Q13.7 11.7 13.2 11.7 H0.8 Q0.3 11.7 0.3 11.2Z" fill="#c2c2c2"/></svg>
<div class="t" style="left:94.5px;top:714px;font-size:15px;letter-spacing:0.57px;">tronco2</div>
<svg style="left:40px;top:738px" width="14" height="12" viewBox="0 0 14 12"><path d="M0.3 0.8 Q0.3 0.3 0.8 0.3 H5 L6.6 2.2 H13.2 Q13.7 2.2 13.7 2.7 V11.2 Q13.7 11.7 13.2 11.7 H0.8 Q0.3 11.7 0.3 11.2Z" fill="#c2c2c2"/></svg>
<div class="t" style="left:59.5px;top:734px;font-size:15px;letter-spacing:0.45px;">Paletas</div>
<svg style="left:23px;top:761px" width="11" height="8" viewBox="0 0 11 8"><path d="M0.3 0.3 H10.7 L5.5 7.7Z" fill="#7d7d7d"/></svg>
<svg style="left:39px;top:758px" width="16" height="12" viewBox="0 0 16 12"><path d="M0.3 0.8 Q0.3 0.3 0.8 0.3 H5 L6.6 2.2 H12.6 Q13.1 2.2 13.1 2.7 V4.2 H3.4 L0.3 10.4Z" fill="#c2c2c2"/><path d="M3.9 5.2 H15.7 L12.6 11.7 H0.6Z" fill="#c2c2c2"/></svg>
<div class="t" style="left:59.5px;top:754px;font-size:15px;letter-spacing:0.49px;">Scenes</div>
<svg style="left:58px;top:778px" width="14" height="12" viewBox="0 0 14 12"><path d="M0.3 0.8 Q0.3 0.3 0.8 0.3 H5 L6.6 2.2 H13.2 Q13.7 2.2 13.7 2.7 V11.2 Q13.7 11.7 13.2 11.7 H0.8 Q0.3 11.7 0.3 11.2Z" fill="#c2c2c2"/></svg>
<div class="t" style="left:77.5px;top:774px;font-size:15px;letter-spacing:-0.30px;">CARTELES</div>
<svg style="left:23px;top:801px" width="11" height="8" viewBox="0 0 11 8"><path d="M0.3 0.3 H10.7 L5.5 7.7Z" fill="#7d7d7d"/></svg>
<svg style="left:39px;top:798px" width="16" height="12" viewBox="0 0 16 12"><path d="M0.3 0.8 Q0.3 0.3 0.8 0.3 H5 L6.6 2.2 H12.6 Q13.1 2.2 13.1 2.7 V4.2 H3.4 L0.3 10.4Z" fill="#c2c2c2"/><path d="M3.9 5.2 H15.7 L12.6 11.7 H0.6Z" fill="#c2c2c2"/></svg>
<div class="t" style="left:59.5px;top:794px;font-size:15px;letter-spacing:0.45px;">Scripts</div>
<svg style="left:58px;top:818px" width="14" height="12" viewBox="0 0 14 12"><path d="M0.3 0.8 Q0.3 0.3 0.8 0.3 H5 L6.6 2.2 H13.2 Q13.7 2.2 13.7 2.7 V11.2 Q13.7 11.7 13.2 11.7 H0.8 Q0.3 11.7 0.3 11.2Z" fill="#c2c2c2"/></svg>
<div class="t" style="left:77.5px;top:814px;font-size:15px;letter-spacing:-0.37px;">NIVEL1</div>
<svg style="left:58px;top:838px" width="14" height="12" viewBox="0 0 14 12"><path d="M0.3 0.8 Q0.3 0.3 0.8 0.3 H5 L6.6 2.2 H13.2 Q13.7 2.2 13.7 2.7 V11.2 Q13.7 11.7 13.2 11.7 H0.8 Q0.3 11.7 0.3 11.2Z" fill="#c2c2c2"/></svg>
<div class="t" style="left:77.5px;top:834px;font-size:15px;letter-spacing:-0.12px;">NIVEL2</div>
<svg style="left:58px;top:858px" width="14" height="12" viewBox="0 0 14 12"><path d="M0.3 0.8 Q0.3 0.3 0.8 0.3 H5 L6.6 2.2 H13.2 Q13.7 2.2 13.7 2.7 V11.2 Q13.7 11.7 13.2 11.7 H0.8 Q0.3 11.7 0.3 11.2Z" fill="#c2c2c2"/></svg>
<div class="t" style="left:77.5px;top:854px;font-size:15px;letter-spacing:-0.03px;">NIVEL3</div>
<svg style="left:25px;top:879px" width="9" height="10" viewBox="0 0 9 10"><path d="M0.4 0.3 L8.6 5 L0.4 9.7Z" fill="#8a8a8a"/></svg>
<svg style="left:40px;top:878px" width="14" height="12" viewBox="0 0 14 12"><path d="M0.3 0.8 Q0.3 0.3 0.8 0.3 H5 L6.6 2.2 H13.2 Q13.7 2.2 13.7 2.7 V11.2 Q13.7 11.7 13.2 11.7 H0.8 Q0.3 11.7 0.3 11.2Z" fill="#c2c2c2"/></svg>
<div class="t" style="left:59.5px;top:874px;font-size:15px;letter-spacing:0.61px;">TextMesh Pro</div>
<svg style="left:23px;top:901px" width="11" height="8" viewBox="0 0 11 8"><path d="M0.3 0.3 H10.7 L5.5 7.7Z" fill="#7d7d7d"/></svg>
<svg style="left:39px;top:898px" width="16" height="12" viewBox="0 0 16 12"><path d="M0.3 0.8 Q0.3 0.3 0.8 0.3 H5 L6.6 2.2 H12.6 Q13.1 2.2 13.1 2.7 V4.2 H3.4 L0.3 10.4Z" fill="#c2c2c2"/><path d="M3.9 5.2 H15.7 L12.6 11.7 H0.6Z" fill="#c2c2c2"/></svg>
<div class="t" style="left:59.5px;top:894px;font-size:15px;letter-spacing:0.29px;">Tiny RPG Forest</div>
<svg style="left:41px;top:921px" width="11" height="8" viewBox="0 0 11 8"><path d="M0.3 0.3 H10.7 L5.5 7.7Z" fill="#7d7d7d"/></svg>
<svg style="left:57px;top:918px" width="16" height="12" viewBox="0 0 16 12"><path d="M0.3 0.8 Q0.3 0.3 0.8 0.3 H5 L6.6 2.2 H12.6 Q13.1 2.2 13.1 2.7 V4.2 H3.4 L0.3 10.4Z" fill="#c2c2c2"/><path d="M3.9 5.2 H15.7 L12.6 11.7 H0.6Z" fill="#c2c2c2"/></svg>
<div class="t" style="left:77.5px;top:914px;font-size:15px;letter-spacing:0.45px;">Artwork</div>
<svg style="left:60px;top:939px" width="9" height="10" viewBox="0 0 9 10"><path d="M0.4 0.3 L8.6 5 L0.4 9.7Z" fill="#8a8a8a"/></svg>
<svg style="left:75px;top:938px" width="14" height="12" viewBox="0 0 14 12"><path d="M0.3 0.8 Q0.3 0.3 0.8 0.3 H5 L6.6 2.2 H13.2 Q13.7 2.2 13.7 2.7 V11.2 Q13.7 11.7 13.2 11.7 H0.8 Q0.3 11.7 0.3 11.2Z" fill="#c2c2c2"/></svg>
<div class="t" style="left:94.5px;top:934px;font-size:15px;letter-spacing:0.34px;">Environment</div>
<div class="abs" style="left:300px;top:691px;width:877px;height:25px;background:#414141;"></div>
<div class="abs" style="left:300px;top:716px;width:877px;height:1px;background:#2a2a2a;"></div>
<div class="abs" style="left:300px;top:717px;width:877px;height:196px;background:#333333;"></div>
<div class="abs" style="left:300px;top:913px;width:877px;height:26px;background:#414141;"></div>
<div class="t" style="left:305.4px;top:694px;font-size:15px;color:#bdbdbd;letter-spacing:0.33px;">Assets</div>
<svg style="left:361px;top:699px" width="7" height="11" viewBox="0 0 7 11"><path d="M1 1 L5.6 5.5 L1 10" fill="none" stroke="#8c8c8c" stroke-width="1.5"/></svg>
<div class="t" style="left:375.2px;top:694px;font-size:15px;font-weight:bold;color:#d8d8d8;letter-spacing:0.21px;">Scenes</div>
<svg style="left:329px;top:745px" width="60.3" height="50.2" viewBox="0 0 61 52" preserveAspectRatio="none"><path d="M0 4 Q0 0 4 0 H24 Q26.5 0 28 2 L33 9.5 H57 Q61 9.5 61 13.5 V48 Q61 52 57 52 H4 Q0 52 0 48Z" fill="#c2c2c2"/></svg>
<svg style="left:423.75px;top:734.6px" width="60.5" height="70.3" viewBox="0 0 60.5 70.3"><path d="M30.25 0 L60.5 16 V53.5 L30.25 70.3 L0 53.5 V16Z" fill="#e6e6e6"/><path d="M30.25 34 L60.5 16 V53.5 L30.25 70.3Z" fill="#d6d6d6"/><path d="M30.25 34 L0 16 L30.25 0 L60.5 16Z" fill="#f3f3f3"/><g fill="#333333"><path d="M30.25 9.6 L44.6 18.5 L30.25 27.4 L15.8 18.5Z"/><path d="M27.4 -1 H33.1 V13 H27.4Z"/><path d="M10.3 28.5 L25.3 37 V55.1 L10.3 47.5Z"/><path d="M-1 48.2 L10.8 42 V48 L1 53.6Z"/><path d="M50.2 28.5 L35.2 37 V55.1 L50.2 47.5Z"/><path d="M61.5 48.2 L49.7 42 V48 L59.5 53.6Z"/></g></svg>
<svg style="left:518.75px;top:734.6px" width="60.5" height="70.3" viewBox="0 0 60.5 70.3"><path d="M30.25 0 L60.5 16 V53.5 L30.25 70.3 L0 53.5 V16Z" fill="#e6e6e6"/><path d="M30.25 34 L60.5 16 V53.5 L30.25 70.3Z" fill="#d6d6d6"/><path d="M30.25 34 L0 16 L30.25 0 L60.5 16Z" fill="#f3f3f3"/><g fill="#333333"><path d="M30.25 9.6 L44.6 18.5 L30.25 27.4 L15.8 18.5Z"/><path d="M27.4 -1 H33.1 V13 H27.4Z"/><path d="M10.3 28.5 L25.3 37 V55.1 L10.3 47.5Z"/><path d="M-1 48.2 L10.8 42 V48 L1 53.6Z"/><path d="M50.2 28.5 L35.2 37 V55.1 L50.2 47.5Z"/><path d="M61.5 48.2 L49.7 42 V48 L59.5 53.6Z"/></g></svg>
<svg style="left:613.75px;top:734.6px" width="60.5" height="70.3" viewBox="0 0 60.5 70.3"><path d="M30.25 0 L60.5 16 V53.5 L30.25 70.3 L0 53.5 V16Z" fill="#e6e6e6"/><path d="M30.25 34 L60.5 16 V53.5 L30.25 70.3Z" fill="#d6d6d6"/><path d="M30.25 34 L0 16 L30.25 0 L60.5 16Z" fill="#f3f3f3"/><g fill="#333333"><path d="M30.25 9.6 L44.6 18.5 L30.25 27.4 L15.8 18.5Z"/><path d="M27.4 -1 H33.1 V13 H27.4Z"/><path d="M10.3 28.5 L25.3 37 V55.1 L10.3 47.5Z"/><path d="M-1 48.2 L10.8 42 V48 L1 53.6Z"/><path d="M50.2 28.5 L35.2 37 V55.1 L50.2 47.5Z"/><path d="M61.5 48.2 L49.7 42 V48 L59.5 53.6Z"/></g></svg>
<svg style="left:708.75px;top:734.6px" width="60.5" height="70.3" viewBox="0 0 60.5 70.3"><path d="M30.25 0 L60.5 16 V53.5 L30.25 70.3 L0 53.5 V16Z" fill="#e6e6e6"/><path d="M30.25 34 L60.5 16 V53.5 L30.25 70.3Z" fill="#d6d6d6"/><path d="M30.25 34 L0 16 L30.25 0 L60.5 16Z" fill="#f3f3f3"/><g fill="#333333"><path d="M30.25 9.6 L44.6 18.5 L30.25 27.4 L15.8 18.5Z"/><path d="M27.4 -1 H33.1 V13 H27.4Z"/><path d="M10.3 28.5 L25.3 37 V55.1 L10.3 47.5Z"/><path d="M-1 48.2 L10.8 42 V48 L1 53.6Z"/><path d="M50.2 28.5 L35.2 37 V55.1 L50.2 47.5Z"/><path d="M61.5 48.2 L49.7 42 V48 L59.5 53.6Z"/></g></svg>
<svg style="left:803.75px;top:734.6px" width="60.5" height="70.3" viewBox="0 0 60.5 70.3"><path d="M30.25 0 L60.5 16 V53.5 L30.25 70.3 L0 53.5 V16Z" fill="#e6e6e6"/><path d="M30.25 34 L60.5 16 V53.5 L30.25 70.3Z" fill="#d6d6d6"/><path d="M30.25 34 L0 16 L30.25 0 L60.5 16Z" fill="#f3f3f3"/><g fill="#333333"><path d="M30.25 9.6 L44.6 18.5 L30.25 27.4 L15.8 18.5Z"/><path d="M27.4 -1 H33.1 V13 H27.4Z"/><path d="M10.3 28.5 L25.3 37 V55.1 L10.3 47.5Z"/><path d="M-1 48.2 L10.8 42 V48 L1 53.6Z"/><path d="M50.2 28.5 L35.2 37 V55.1 L50.2 47.5Z"/><path d="M61.5 48.2 L49.7 42 V48 L59.5 53.6Z"/></g></svg>
<svg style="left:898.75px;top:734.6px" width="60.5" height="70.3" viewBox="0 0 60.5 70.3"><path d="M30.25 0 L60.5 16 V53.5 L30.25 70.3 L0 53.5 V16Z" fill="#e6e6e6"/><path d="M30.25 34 L60.5 16 V53.5 L30.25 70.3Z" fill="#d6d6d6"/><path d="M30.25 34 L0 16 L30.25 0 L60.5 16Z" fill="#f3f3f3"/><g fill="#333333"><path d="M30.25 9.6 L44.6 18.5 L30.25 27.4 L15.8 18.5Z"/><path d="M27.4 -1 H33.1 V13 H27.4Z"/><path d="M10.3 28.5 L25.3 37 V55.1 L10.3 47.5Z"/><path d="M-1 48.2 L10.8 42 V48 L1 53.6Z"/><path d="M50.2 28.5 L35.2 37 V55.1 L50.2 47.5Z"/><path d="M61.5 48.2 L49.7 42 V48 L59.5 53.6Z"/></g></svg>
<div class="t" style="left:326.2px;top:811px;font-size:12.5px;color:#cfcfcf;letter-spacing:-0.03px;">CARTELES</div>
<div class="t" style="left:419.2px;top:811px;font-size:12.5px;color:#cfcfcf;letter-spacing:0.19px;">GAME OV...</div>
<div class="t" style="left:522.4px;top:811px;font-size:12.5px;color:#cfcfcf;letter-spacing:-0.54px;">JUEGO_1</div>
<div class="t" style="left:616.5px;top:811px;font-size:12.5px;color:#cfcfcf;letter-spacing:-0.28px;">JUEGO_2</div>
<div class="t" style="left:711.2px;top:811px;font-size:12.5px;color:#cfcfcf;letter-spacing:-0.21px;">JUEGO_3</div>
<div class="t" style="left:806.2px;top:811px;font-size:12.5px;color:#cfcfcf;letter-spacing:-0.21px;">JUEGO_4</div>
<div class="t" style="left:903.5px;top:811px;font-size:12.5px;color:#cfcfcf;letter-spacing:0.05px;">PUEBLO</div>
<div class="abs" style="left:1088px;top:926px;width:69px;height:2px;background:#5c5c5c;"></div>
<div class="abs" style="left:1122px;top:920px;width:12px;height:12px;background:#a8a8a8;border-radius:6px"></div>

<!-- ===== bottom: animation ===== -->
<div class="abs" style="left:1179px;top:641px;width:281px;height:24px;background:#282828;border-radius:3px 0 0 0"></div>
<div class="abs" style="left:1179px;top:641px;width:123px;height:24px;background:#3c3c3c;border-radius:3px 3px 0 0"></div>
<svg style="left:1190px;top:646px" width="14" height="14" viewBox="0 0 14 14"><circle cx="7" cy="7" r="6.8" fill="#d0d0d0"/><path d="M7 2.6 V7.4 H11" fill="none" stroke="#3c3c3c" stroke-width="1.7"/></svg>
<div class="t" style="left:1209.5px;top:644px;font-size:15px;letter-spacing:0.44px;">Animation</div>
<svg style="left:1422px;top:646px" width="12" height="12" viewBox="0 0 12 12"><path d="M2.5 5 V3.2 C2.5 1.6 3.6 0.8 4.9 0.8 H7.4 C8.8 0.8 9.6 1.8 9.6 3" fill="none" stroke="#8a8a8a" stroke-width="1.2"/><rect x="1.1" y="5.6" width="8.8" height="5" fill="none" stroke="#8a8a8a" stroke-width="1.2"/></svg>
<svg style="left:1447px;top:646px" width="4" height="12" viewBox="0 0 4 12"><circle cx="2" cy="1.6" r="1.4" fill="#c4c4c4"/><circle cx="2" cy="6" r="1.4" fill="#c4c4c4"/><circle cx="2" cy="10.4" r="1.4" fill="#c4c4c4"/></svg>
<div class="abs" style="left:1179px;top:665px;width:281px;height:25px;background:#3c3c3c;"></div>
<div class="abs" style="left:1179px;top:690px;width:281px;height:1px;background:#2a2a2a;"></div>
<div class="abs" style="left:1179px;top:691px;width:281px;height:25px;background:#3c3c3c;"></div>
<div class="abs" style="left:1179px;top:715px;width:281px;height:1px;background:#2c2c2c;"></div>
<div class="abs" style="left:1179px;top:716px;width:281px;height:197px;background:#383838;"></div>
<div class="abs" style="left:1179px;top:912px;width:281px;height:1px;background:#2c2c2c;"></div>
<div class="abs" style="left:1179px;top:913px;width:281px;height:26px;background:#3c3c3c;"></div>
<div class="abs" style="left:1455px;top:691px;width:1px;height:25px;background:#2a2a2a;"></div>
<div class="t" style="left:1184.7px;top:668px;font-size:15px;color:#7a7a7a;letter-spacing:0.46px;">Preview</div>
<div class="abs" style="left:1250px;top:665px;width:1px;height:25px;background:#2e2e2e;"></div>
<div class="abs" style="left:1283px;top:665px;width:1px;height:25px;background:#2e2e2e;"></div>
<div class="abs" style="left:1316px;top:665px;width:1px;height:25px;background:#2e2e2e;"></div>
<div class="abs" style="left:1348px;top:665px;width:1px;height:25px;background:#2e2e2e;"></div>
<div class="abs" style="left:1381px;top:665px;width:1px;height:25px;background:#2e2e2e;"></div>
<div class="abs" style="left:1414px;top:665px;width:1px;height:25px;background:#2e2e2e;"></div>
<div class="abs" style="left:1446px;top:665px;width:1px;height:25px;background:#2e2e2e;"></div>
<svg style="left:1257px;top:669px" width="18" height="18" viewBox="0 0 18 18"><circle cx="9" cy="9" r="8" fill="none" stroke="#8c8c8c" stroke-width="1.2"/><circle cx="9" cy="9" r="5.6" fill="#c0553a"/></svg>
<svg style="left:1290px;top:672px" width="19" height="12" viewBox="0 0 19 12"><rect x="0.5" y="0.5" width="2" height="11" fill="#8c8c8c"/><path d="M10.5 0.5 V11.5 L2.8 6Z M18.5 0.5 V11.5 L10.8 6Z" fill="#8c8c8c"/></svg>
<svg style="left:1325px;top:672px" width="13" height="12" viewBox="0 0 13 12"><rect x="0.5" y="0.5" width="2.2" height="11" fill="#8c8c8c"/><path d="M12.5 0.5 V11.5 L3.4 6Z" fill="#8c8c8c"/></svg>
<svg style="left:1358px;top:672px" width="12" height="12" viewBox="0 0 12 12"><path d="M0.5 0.3 L11.5 6 L0.5 11.7Z" fill="#8c8c8c"/></svg>
<svg style="left:1390px;top:672px" width="13" height="12" viewBox="0 0 13 12"><path d="M0.5 0.5 V11.5 L9.6 6Z" fill="#8c8c8c"/><rect x="10.3" y="0.5" width="2.2" height="11" fill="#8c8c8c"/></svg>
<svg style="left:1420px;top:672px" width="19" height="12" viewBox="0 0 19 12"><path d="M0.5 0.5 V11.5 L8.2 6Z M8.5 0.5 V11.5 L16.2 6Z" fill="#8c8c8c"/><rect x="16.5" y="0.5" width="2" height="11" fill="#8c8c8c"/></svg>
<div class="abs" style="left:1354px;top:914px;width:99px;height:25px;background:#464646;"></div>
<div class="t" style="left:1364.5px;top:917px;font-size:15px;color:#7c7c7c;letter-spacing:0.54px;">Dopesheet</div>
</body>
</html>
